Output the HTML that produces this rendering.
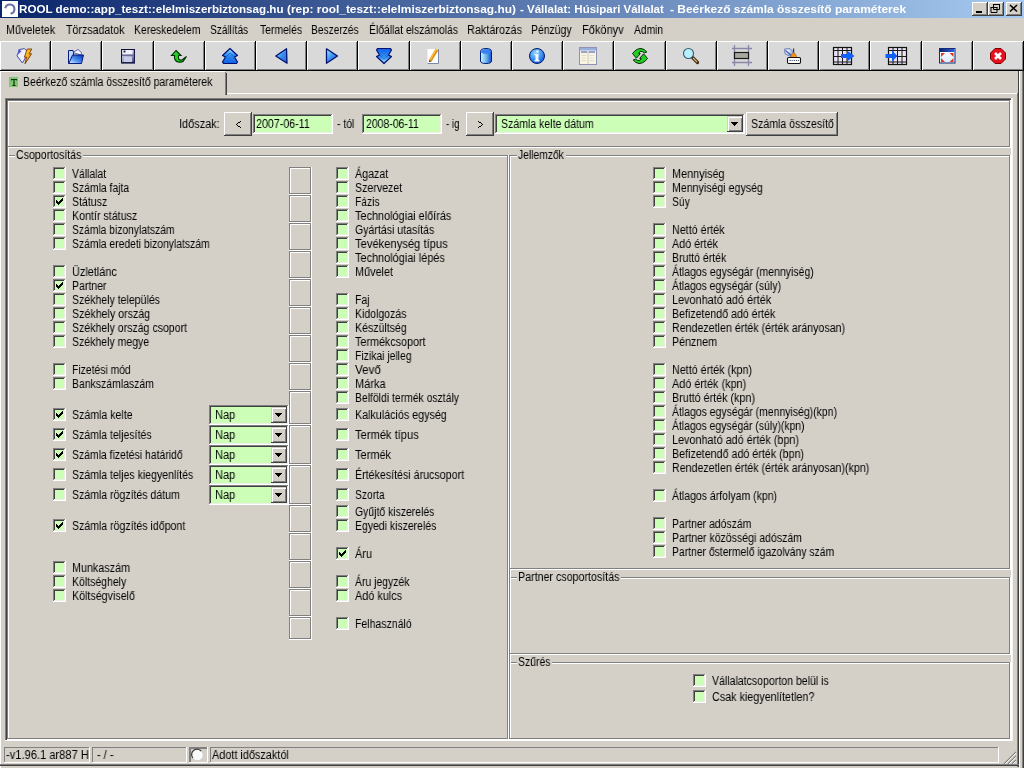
<!DOCTYPE html>
<html><head><meta charset="utf-8"><title>ROOL</title>
<style>
html,body{margin:0;padding:0;width:1024px;height:768px;overflow:hidden;background:#D4D0C8;}
body{position:relative;font-family:"Liberation Sans",sans-serif;}
#r div{position:absolute;}
#r .t{position:absolute;will-change:transform;font-size:12px;line-height:13px;white-space:pre;transform-origin:0 0;color:#000;}
svg{position:absolute;left:0;top:0;}
</style></head><body><div id="r">
<div style="left:0px;top:0px;width:1024px;height:18px;background:linear-gradient(to right,#0A246A,#A6CAF0);"></div><div style="left:2px;top:1px;width:16px;height:16px;background:#FFFFFF;"></div><div class="t" style="left:19.25px;top:3px;font-weight:bold;font-size:11px;color:#FFFFFF;transform:scaleX(1.0566);">ROOL demo::app_teszt::elelmiszerbiztonsag.hu</div><div class="t" style="left:286.6px;top:3px;font-weight:bold;font-size:11px;color:#FFFFFF;transform:scaleX(1.0825);">(rep: rool_teszt::elelmiszerbiztonsag.hu)</div><div class="t" style="left:519.7px;top:3px;font-weight:bold;font-size:11px;color:#FFFFFF;transform:scaleX(1.0457);">- Vállalat: Húsipari Vállalat</div><div class="t" style="left:669.5px;top:3px;font-weight:bold;font-size:11px;color:#FFFFFF;transform:scaleX(1.0876);">- Beérkező számla összesítő paraméterek</div><div style="left:972px;top:2px;width:16px;height:14px;background:#D4D0C8;"></div><div style="left:972px;top:2px;width:16px;height:1px;background:#FFFFFF;"></div><div style="left:972px;top:2px;width:1px;height:14px;background:#FFFFFF;"></div><div style="left:972px;top:15px;width:16px;height:1px;background:#404040;"></div><div style="left:987px;top:2px;width:1px;height:14px;background:#404040;"></div><div style="left:973px;top:14px;width:14px;height:1px;background:#808080;"></div><div style="left:986px;top:3px;width:1px;height:12px;background:#808080;"></div><div style="left:988px;top:2px;width:16px;height:14px;background:#D4D0C8;"></div><div style="left:988px;top:2px;width:16px;height:1px;background:#FFFFFF;"></div><div style="left:988px;top:2px;width:1px;height:14px;background:#FFFFFF;"></div><div style="left:988px;top:15px;width:16px;height:1px;background:#404040;"></div><div style="left:1003px;top:2px;width:1px;height:14px;background:#404040;"></div><div style="left:989px;top:14px;width:14px;height:1px;background:#808080;"></div><div style="left:1002px;top:3px;width:1px;height:12px;background:#808080;"></div><div style="left:1006px;top:2px;width:16px;height:14px;background:#D4D0C8;"></div><div style="left:1006px;top:2px;width:16px;height:1px;background:#FFFFFF;"></div><div style="left:1006px;top:2px;width:1px;height:14px;background:#FFFFFF;"></div><div style="left:1006px;top:15px;width:16px;height:1px;background:#404040;"></div><div style="left:1021px;top:2px;width:1px;height:14px;background:#404040;"></div><div style="left:1007px;top:14px;width:14px;height:1px;background:#808080;"></div><div style="left:1020px;top:3px;width:1px;height:12px;background:#808080;"></div><div class="t" style="left:6.0px;top:24px;transform:scaleX(0.8981);">Műveletek</div><div class="t" style="left:66.0px;top:24px;transform:scaleX(0.8864);">Törzsadatok</div><div class="t" style="left:134.0px;top:24px;transform:scaleX(0.8667);">Kereskedelem</div><div class="t" style="left:210.0px;top:24px;transform:scaleX(0.8409);">Szállítás</div><div class="t" style="left:259.5px;top:24px;transform:scaleX(0.8646);">Termelés</div><div class="t" style="left:311.0px;top:24px;transform:scaleX(0.8500);">Beszerzés</div><div class="t" style="left:368.5px;top:24px;transform:scaleX(0.8663);">Élőállat elszámolás</div><div class="t" style="left:466.5px;top:24px;transform:scaleX(0.9068);">Raktározás</div><div class="t" style="left:531.0px;top:24px;transform:scaleX(0.8696);">Pénzügy</div><div class="t" style="left:581.5px;top:24px;transform:scaleX(0.9205);">Főkönyv</div><div class="t" style="left:633.75px;top:24px;transform:scaleX(0.8561);">Admin</div><div style="left:0px;top:41px;width:51px;height:30px;background:#D9D9DA;"></div><div style="left:0px;top:41px;width:51px;height:1px;background:#FFFFFF;"></div><div style="left:0px;top:41px;width:1px;height:30px;background:#FFFFFF;"></div><div style="left:0px;top:70px;width:51px;height:1px;background:#000000;"></div><div style="left:50px;top:41px;width:1px;height:30px;background:#000000;"></div><div style="left:1px;top:69px;width:49px;height:1px;background:#808080;"></div><div style="left:49px;top:42px;width:1px;height:28px;background:#808080;"></div><div style="left:51px;top:41px;width:51px;height:30px;background:#D9D9DA;"></div><div style="left:51px;top:41px;width:51px;height:1px;background:#FFFFFF;"></div><div style="left:51px;top:41px;width:1px;height:30px;background:#FFFFFF;"></div><div style="left:51px;top:70px;width:51px;height:1px;background:#000000;"></div><div style="left:101px;top:41px;width:1px;height:30px;background:#000000;"></div><div style="left:52px;top:69px;width:49px;height:1px;background:#808080;"></div><div style="left:100px;top:42px;width:1px;height:28px;background:#808080;"></div><div style="left:102px;top:41px;width:52px;height:30px;background:#D9D9DA;"></div><div style="left:102px;top:41px;width:52px;height:1px;background:#FFFFFF;"></div><div style="left:102px;top:41px;width:1px;height:30px;background:#FFFFFF;"></div><div style="left:102px;top:70px;width:52px;height:1px;background:#000000;"></div><div style="left:153px;top:41px;width:1px;height:30px;background:#000000;"></div><div style="left:103px;top:69px;width:50px;height:1px;background:#808080;"></div><div style="left:152px;top:42px;width:1px;height:28px;background:#808080;"></div><div style="left:154px;top:41px;width:51px;height:30px;background:#D9D9DA;"></div><div style="left:154px;top:41px;width:51px;height:1px;background:#FFFFFF;"></div><div style="left:154px;top:41px;width:1px;height:30px;background:#FFFFFF;"></div><div style="left:154px;top:70px;width:51px;height:1px;background:#000000;"></div><div style="left:204px;top:41px;width:1px;height:30px;background:#000000;"></div><div style="left:155px;top:69px;width:49px;height:1px;background:#808080;"></div><div style="left:203px;top:42px;width:1px;height:28px;background:#808080;"></div><div style="left:205px;top:41px;width:51px;height:30px;background:#D9D9DA;"></div><div style="left:205px;top:41px;width:51px;height:1px;background:#FFFFFF;"></div><div style="left:205px;top:41px;width:1px;height:30px;background:#FFFFFF;"></div><div style="left:205px;top:70px;width:51px;height:1px;background:#000000;"></div><div style="left:255px;top:41px;width:1px;height:30px;background:#000000;"></div><div style="left:206px;top:69px;width:49px;height:1px;background:#808080;"></div><div style="left:254px;top:42px;width:1px;height:28px;background:#808080;"></div><div style="left:256px;top:41px;width:51px;height:30px;background:#D9D9DA;"></div><div style="left:256px;top:41px;width:51px;height:1px;background:#FFFFFF;"></div><div style="left:256px;top:41px;width:1px;height:30px;background:#FFFFFF;"></div><div style="left:256px;top:70px;width:51px;height:1px;background:#000000;"></div><div style="left:306px;top:41px;width:1px;height:30px;background:#000000;"></div><div style="left:257px;top:69px;width:49px;height:1px;background:#808080;"></div><div style="left:305px;top:42px;width:1px;height:28px;background:#808080;"></div><div style="left:307px;top:41px;width:51px;height:30px;background:#D9D9DA;"></div><div style="left:307px;top:41px;width:51px;height:1px;background:#FFFFFF;"></div><div style="left:307px;top:41px;width:1px;height:30px;background:#FFFFFF;"></div><div style="left:307px;top:70px;width:51px;height:1px;background:#000000;"></div><div style="left:357px;top:41px;width:1px;height:30px;background:#000000;"></div><div style="left:308px;top:69px;width:49px;height:1px;background:#808080;"></div><div style="left:356px;top:42px;width:1px;height:28px;background:#808080;"></div><div style="left:358px;top:41px;width:52px;height:30px;background:#D9D9DA;"></div><div style="left:358px;top:41px;width:52px;height:1px;background:#FFFFFF;"></div><div style="left:358px;top:41px;width:1px;height:30px;background:#FFFFFF;"></div><div style="left:358px;top:70px;width:52px;height:1px;background:#000000;"></div><div style="left:409px;top:41px;width:1px;height:30px;background:#000000;"></div><div style="left:359px;top:69px;width:50px;height:1px;background:#808080;"></div><div style="left:408px;top:42px;width:1px;height:28px;background:#808080;"></div><div style="left:410px;top:41px;width:51px;height:30px;background:#D9D9DA;"></div><div style="left:410px;top:41px;width:51px;height:1px;background:#FFFFFF;"></div><div style="left:410px;top:41px;width:1px;height:30px;background:#FFFFFF;"></div><div style="left:410px;top:70px;width:51px;height:1px;background:#000000;"></div><div style="left:460px;top:41px;width:1px;height:30px;background:#000000;"></div><div style="left:411px;top:69px;width:49px;height:1px;background:#808080;"></div><div style="left:459px;top:42px;width:1px;height:28px;background:#808080;"></div><div style="left:461px;top:41px;width:51px;height:30px;background:#D9D9DA;"></div><div style="left:461px;top:41px;width:51px;height:1px;background:#FFFFFF;"></div><div style="left:461px;top:41px;width:1px;height:30px;background:#FFFFFF;"></div><div style="left:461px;top:70px;width:51px;height:1px;background:#000000;"></div><div style="left:511px;top:41px;width:1px;height:30px;background:#000000;"></div><div style="left:462px;top:69px;width:49px;height:1px;background:#808080;"></div><div style="left:510px;top:42px;width:1px;height:28px;background:#808080;"></div><div style="left:512px;top:41px;width:51px;height:30px;background:#D9D9DA;"></div><div style="left:512px;top:41px;width:51px;height:1px;background:#FFFFFF;"></div><div style="left:512px;top:41px;width:1px;height:30px;background:#FFFFFF;"></div><div style="left:512px;top:70px;width:51px;height:1px;background:#000000;"></div><div style="left:562px;top:41px;width:1px;height:30px;background:#000000;"></div><div style="left:513px;top:69px;width:49px;height:1px;background:#808080;"></div><div style="left:561px;top:42px;width:1px;height:28px;background:#808080;"></div><div style="left:563px;top:41px;width:51px;height:30px;background:#D9D9DA;"></div><div style="left:563px;top:41px;width:51px;height:1px;background:#FFFFFF;"></div><div style="left:563px;top:41px;width:1px;height:30px;background:#FFFFFF;"></div><div style="left:563px;top:70px;width:51px;height:1px;background:#000000;"></div><div style="left:613px;top:41px;width:1px;height:30px;background:#000000;"></div><div style="left:564px;top:69px;width:49px;height:1px;background:#808080;"></div><div style="left:612px;top:42px;width:1px;height:28px;background:#808080;"></div><div style="left:614px;top:41px;width:52px;height:30px;background:#D9D9DA;"></div><div style="left:614px;top:41px;width:52px;height:1px;background:#FFFFFF;"></div><div style="left:614px;top:41px;width:1px;height:30px;background:#FFFFFF;"></div><div style="left:614px;top:70px;width:52px;height:1px;background:#000000;"></div><div style="left:665px;top:41px;width:1px;height:30px;background:#000000;"></div><div style="left:615px;top:69px;width:50px;height:1px;background:#808080;"></div><div style="left:664px;top:42px;width:1px;height:28px;background:#808080;"></div><div style="left:666px;top:41px;width:51px;height:30px;background:#D9D9DA;"></div><div style="left:666px;top:41px;width:51px;height:1px;background:#FFFFFF;"></div><div style="left:666px;top:41px;width:1px;height:30px;background:#FFFFFF;"></div><div style="left:666px;top:70px;width:51px;height:1px;background:#000000;"></div><div style="left:716px;top:41px;width:1px;height:30px;background:#000000;"></div><div style="left:667px;top:69px;width:49px;height:1px;background:#808080;"></div><div style="left:715px;top:42px;width:1px;height:28px;background:#808080;"></div><div style="left:717px;top:41px;width:51px;height:30px;background:#D9D9DA;"></div><div style="left:717px;top:41px;width:51px;height:1px;background:#FFFFFF;"></div><div style="left:717px;top:41px;width:1px;height:30px;background:#FFFFFF;"></div><div style="left:717px;top:70px;width:51px;height:1px;background:#000000;"></div><div style="left:767px;top:41px;width:1px;height:30px;background:#000000;"></div><div style="left:718px;top:69px;width:49px;height:1px;background:#808080;"></div><div style="left:766px;top:42px;width:1px;height:28px;background:#808080;"></div><div style="left:768px;top:41px;width:51px;height:30px;background:#D9D9DA;"></div><div style="left:768px;top:41px;width:51px;height:1px;background:#FFFFFF;"></div><div style="left:768px;top:41px;width:1px;height:30px;background:#FFFFFF;"></div><div style="left:768px;top:70px;width:51px;height:1px;background:#000000;"></div><div style="left:818px;top:41px;width:1px;height:30px;background:#000000;"></div><div style="left:769px;top:69px;width:49px;height:1px;background:#808080;"></div><div style="left:817px;top:42px;width:1px;height:28px;background:#808080;"></div><div style="left:819px;top:41px;width:51px;height:30px;background:#D9D9DA;"></div><div style="left:819px;top:41px;width:51px;height:1px;background:#FFFFFF;"></div><div style="left:819px;top:41px;width:1px;height:30px;background:#FFFFFF;"></div><div style="left:819px;top:70px;width:51px;height:1px;background:#000000;"></div><div style="left:869px;top:41px;width:1px;height:30px;background:#000000;"></div><div style="left:820px;top:69px;width:49px;height:1px;background:#808080;"></div><div style="left:868px;top:42px;width:1px;height:28px;background:#808080;"></div><div style="left:870px;top:41px;width:52px;height:30px;background:#D9D9DA;"></div><div style="left:870px;top:41px;width:52px;height:1px;background:#FFFFFF;"></div><div style="left:870px;top:41px;width:1px;height:30px;background:#FFFFFF;"></div><div style="left:870px;top:70px;width:52px;height:1px;background:#000000;"></div><div style="left:921px;top:41px;width:1px;height:30px;background:#000000;"></div><div style="left:871px;top:69px;width:50px;height:1px;background:#808080;"></div><div style="left:920px;top:42px;width:1px;height:28px;background:#808080;"></div><div style="left:922px;top:41px;width:51px;height:30px;background:#D9D9DA;"></div><div style="left:922px;top:41px;width:51px;height:1px;background:#FFFFFF;"></div><div style="left:922px;top:41px;width:1px;height:30px;background:#FFFFFF;"></div><div style="left:922px;top:70px;width:51px;height:1px;background:#000000;"></div><div style="left:972px;top:41px;width:1px;height:30px;background:#000000;"></div><div style="left:923px;top:69px;width:49px;height:1px;background:#808080;"></div><div style="left:971px;top:42px;width:1px;height:28px;background:#808080;"></div><div style="left:973px;top:41px;width:51px;height:30px;background:#D9D9DA;"></div><div style="left:973px;top:41px;width:51px;height:1px;background:#FFFFFF;"></div><div style="left:973px;top:41px;width:1px;height:30px;background:#FFFFFF;"></div><div style="left:973px;top:70px;width:51px;height:1px;background:#000000;"></div><div style="left:1023px;top:41px;width:1px;height:30px;background:#000000;"></div><div style="left:974px;top:69px;width:49px;height:1px;background:#808080;"></div><div style="left:1022px;top:42px;width:1px;height:28px;background:#808080;"></div><div style="left:0px;top:71px;width:225px;height:1px;background:#FFFFFF;"></div><div style="left:0px;top:71px;width:1px;height:698px;background:#FFFFFF;"></div><div style="left:225px;top:72px;width:1px;height:23px;background:#808080;"></div><div style="left:226px;top:73px;width:1px;height:22px;background:#404040;"></div><div style="left:227px;top:93px;width:790px;height:1px;background:#FFFFFF;"></div><div style="left:9px;top:77px;width:9px;height:10px;background:#8FD28A;"></div><div class="t" style="left:22.75px;top:76px;transform:scaleX(0.8738);">Beérkező számla összesítő paraméterek</div><div style="left:1017px;top:93px;width:1px;height:674px;background:#808080;"></div><div style="left:1018px;top:71px;width:1px;height:696px;background:#404040;"></div><div style="left:1019px;top:71px;width:1px;height:698px;background:#FFFFFF;"></div><div style="left:1022px;top:71px;width:1px;height:698px;background:#808080;"></div><div style="left:1023px;top:71px;width:1px;height:698px;background:#404040;"></div><div style="left:1012px;top:98px;width:1px;height:643px;background:#F4F4F4;"></div><div style="left:5px;top:98px;width:1007px;height:1px;background:#808080;"></div><div style="left:5px;top:98px;width:1px;height:643px;background:#808080;"></div><div style="left:6px;top:99px;width:1005px;height:1px;background:#404040;"></div><div style="left:6px;top:99px;width:1px;height:641px;background:#404040;"></div><div style="left:5px;top:740px;width:1007px;height:1px;background:#FFFFFF;"></div><div style="left:1011px;top:98px;width:1px;height:643px;background:#FFFFFF;"></div><div style="left:7px;top:100px;width:1003px;height:1px;background:#808080;"></div><div style="left:8px;top:101px;width:1003px;height:1px;background:#FFFFFF;"></div><div style="left:7px;top:100px;width:1px;height:47px;background:#808080;"></div><div style="left:8px;top:101px;width:1px;height:47px;background:#FFFFFF;"></div><div style="left:7px;top:146px;width:1003px;height:1px;background:#808080;"></div><div style="left:7px;top:147px;width:1004px;height:1px;background:#FFFFFF;"></div><div style="left:1009px;top:100px;width:1px;height:47px;background:#808080;"></div><div style="left:1010px;top:100px;width:1px;height:48px;background:#FFFFFF;"></div><div style="left:7px;top:155px;width:501px;height:1px;background:#808080;"></div><div style="left:8px;top:156px;width:501px;height:1px;background:#FFFFFF;"></div><div style="left:7px;top:155px;width:1px;height:584px;background:#808080;"></div><div style="left:8px;top:156px;width:1px;height:584px;background:#FFFFFF;"></div><div style="left:7px;top:738px;width:501px;height:1px;background:#808080;"></div><div style="left:7px;top:739px;width:502px;height:1px;background:#FFFFFF;"></div><div style="left:507px;top:155px;width:1px;height:584px;background:#808080;"></div><div style="left:508px;top:155px;width:1px;height:585px;background:#FFFFFF;"></div><div style="left:509px;top:155px;width:501px;height:1px;background:#808080;"></div><div style="left:510px;top:156px;width:501px;height:1px;background:#FFFFFF;"></div><div style="left:509px;top:155px;width:1px;height:414px;background:#808080;"></div><div style="left:510px;top:156px;width:1px;height:414px;background:#FFFFFF;"></div><div style="left:509px;top:568px;width:501px;height:1px;background:#808080;"></div><div style="left:509px;top:569px;width:502px;height:1px;background:#FFFFFF;"></div><div style="left:1009px;top:155px;width:1px;height:414px;background:#808080;"></div><div style="left:1010px;top:155px;width:1px;height:415px;background:#FFFFFF;"></div><div style="left:509px;top:577px;width:501px;height:1px;background:#808080;"></div><div style="left:510px;top:578px;width:501px;height:1px;background:#FFFFFF;"></div><div style="left:509px;top:577px;width:1px;height:77px;background:#808080;"></div><div style="left:510px;top:578px;width:1px;height:77px;background:#FFFFFF;"></div><div style="left:509px;top:653px;width:501px;height:1px;background:#808080;"></div><div style="left:509px;top:654px;width:502px;height:1px;background:#FFFFFF;"></div><div style="left:1009px;top:577px;width:1px;height:77px;background:#808080;"></div><div style="left:1010px;top:577px;width:1px;height:78px;background:#FFFFFF;"></div><div style="left:509px;top:662px;width:501px;height:1px;background:#808080;"></div><div style="left:510px;top:663px;width:501px;height:1px;background:#FFFFFF;"></div><div style="left:509px;top:662px;width:1px;height:77px;background:#808080;"></div><div style="left:510px;top:663px;width:1px;height:77px;background:#FFFFFF;"></div><div style="left:509px;top:738px;width:501px;height:1px;background:#808080;"></div><div style="left:509px;top:739px;width:502px;height:1px;background:#FFFFFF;"></div><div style="left:1009px;top:662px;width:1px;height:77px;background:#808080;"></div><div style="left:1010px;top:662px;width:1px;height:78px;background:#FFFFFF;"></div><div style="left:509px;top:569px;width:1px;height:9px;background:#808080;"></div><div style="left:510px;top:569px;width:1px;height:9px;background:#FFFFFF;"></div><div style="left:509px;top:654px;width:1px;height:9px;background:#808080;"></div><div style="left:510px;top:654px;width:1px;height:9px;background:#FFFFFF;"></div><div style="left:7px;top:147px;width:1px;height:9px;background:#808080;"></div><div style="left:8px;top:147px;width:1px;height:9px;background:#FFFFFF;"></div><div style="left:15px;top:150px;width:68px;height:12px;background:#D4D0C8;"></div><div class="t" style="left:15.5px;top:149px;transform:scaleX(0.8836);">Csoportosítás</div><div style="left:517px;top:150px;width:49px;height:12px;background:#D4D0C8;"></div><div class="t" style="left:518.0px;top:149px;transform:scaleX(0.8585);">Jellemzők</div><div style="left:517px;top:572px;width:104px;height:12px;background:#D4D0C8;"></div><div class="t" style="left:517.75px;top:571px;transform:scaleX(0.8894);">Partner csoportosítás</div><div style="left:517px;top:657px;width:35px;height:12px;background:#D4D0C8;"></div><div class="t" style="left:517.75px;top:656px;transform:scaleX(0.8694);">Szűrés</div><div class="t" style="left:179.25px;top:118px;transform:scaleX(0.9116);">Időszak:</div><div style="left:224px;top:112px;width:28px;height:24px;background:#D4D0C8;"></div><div style="left:224px;top:112px;width:28px;height:1px;background:#FFFFFF;"></div><div style="left:224px;top:112px;width:1px;height:24px;background:#FFFFFF;"></div><div style="left:224px;top:135px;width:28px;height:1px;background:#404040;"></div><div style="left:251px;top:112px;width:1px;height:24px;background:#404040;"></div><div style="left:225px;top:134px;width:26px;height:1px;background:#808080;"></div><div style="left:250px;top:113px;width:1px;height:22px;background:#808080;"></div><div style="left:253px;top:114px;width:80px;height:20px;background:#CCFEB8;"></div><div style="left:253px;top:114px;width:80px;height:1px;background:#808080;"></div><div style="left:253px;top:114px;width:1px;height:20px;background:#808080;"></div><div style="left:254px;top:115px;width:78px;height:1px;background:#404040;"></div><div style="left:254px;top:115px;width:1px;height:18px;background:#404040;"></div><div style="left:253px;top:133px;width:80px;height:1px;background:#FFFFFF;"></div><div style="left:332px;top:114px;width:1px;height:20px;background:#FFFFFF;"></div><div style="left:254px;top:132px;width:78px;height:1px;background:#ECEEE8;"></div><div style="left:331px;top:115px;width:1px;height:18px;background:#ECEEE8;"></div><div class="t" style="left:255.75px;top:118px;transform:scaleX(0.8898);">2007-06-11</div><div class="t" style="left:337.0px;top:118px;transform:scaleX(0.8632);">- tól</div><div style="left:362px;top:114px;width:80px;height:20px;background:#CCFEB8;"></div><div style="left:362px;top:114px;width:80px;height:1px;background:#808080;"></div><div style="left:362px;top:114px;width:1px;height:20px;background:#808080;"></div><div style="left:363px;top:115px;width:78px;height:1px;background:#404040;"></div><div style="left:363px;top:115px;width:1px;height:18px;background:#404040;"></div><div style="left:362px;top:133px;width:80px;height:1px;background:#FFFFFF;"></div><div style="left:441px;top:114px;width:1px;height:20px;background:#FFFFFF;"></div><div style="left:363px;top:132px;width:78px;height:1px;background:#ECEEE8;"></div><div style="left:440px;top:115px;width:1px;height:18px;background:#ECEEE8;"></div><div class="t" style="left:366.0px;top:118px;transform:scaleX(0.8729);">2008-06-11</div><div class="t" style="left:446.0px;top:118px;transform:scaleX(0.8125);">- ig</div><div style="left:466px;top:112px;width:28px;height:24px;background:#D4D0C8;"></div><div style="left:466px;top:112px;width:28px;height:1px;background:#FFFFFF;"></div><div style="left:466px;top:112px;width:1px;height:24px;background:#FFFFFF;"></div><div style="left:466px;top:135px;width:28px;height:1px;background:#404040;"></div><div style="left:493px;top:112px;width:1px;height:24px;background:#404040;"></div><div style="left:467px;top:134px;width:26px;height:1px;background:#808080;"></div><div style="left:492px;top:113px;width:1px;height:22px;background:#808080;"></div><div style="left:495px;top:114px;width:250px;height:20px;background:#CCFEB8;"></div><div style="left:495px;top:114px;width:250px;height:1px;background:#808080;"></div><div style="left:495px;top:114px;width:1px;height:20px;background:#808080;"></div><div style="left:496px;top:115px;width:248px;height:1px;background:#404040;"></div><div style="left:496px;top:115px;width:1px;height:18px;background:#404040;"></div><div style="left:495px;top:133px;width:250px;height:1px;background:#FFFFFF;"></div><div style="left:744px;top:114px;width:1px;height:20px;background:#FFFFFF;"></div><div style="left:496px;top:132px;width:248px;height:1px;background:#ECEEE8;"></div><div style="left:743px;top:115px;width:1px;height:18px;background:#ECEEE8;"></div><div style="left:727px;top:116px;width:16px;height:16px;background:#D4D0C8;"></div><div style="left:727px;top:116px;width:16px;height:1px;background:#D4D0C8;"></div><div style="left:727px;top:116px;width:1px;height:16px;background:#D4D0C8;"></div><div style="left:727px;top:131px;width:16px;height:1px;background:#404040;"></div><div style="left:742px;top:116px;width:1px;height:16px;background:#404040;"></div><div style="left:728px;top:130px;width:14px;height:1px;background:#808080;"></div><div style="left:741px;top:117px;width:1px;height:14px;background:#808080;"></div><div style="left:728px;top:117px;width:14px;height:1px;background:#FFFFFF;"></div><div style="left:728px;top:117px;width:1px;height:14px;background:#FFFFFF;"></div><div class="t" style="left:500.75px;top:118px;transform:scaleX(0.8788);">Számla kelte dátum</div><div style="left:746px;top:112px;width:92px;height:24px;background:#D4D0C8;"></div><div style="left:746px;top:112px;width:92px;height:1px;background:#FFFFFF;"></div><div style="left:746px;top:112px;width:1px;height:24px;background:#FFFFFF;"></div><div style="left:746px;top:135px;width:92px;height:1px;background:#404040;"></div><div style="left:837px;top:112px;width:1px;height:24px;background:#404040;"></div><div style="left:747px;top:134px;width:90px;height:1px;background:#808080;"></div><div style="left:836px;top:113px;width:1px;height:22px;background:#808080;"></div><div class="t" style="left:750.5px;top:118px;transform:scaleX(0.8817);">Számla összesítő</div><div style="left:53px;top:167px;width:13px;height:13px;background:#CCFEB8;"></div><div style="left:53px;top:167px;width:13px;height:1px;background:#808080;"></div><div style="left:53px;top:167px;width:1px;height:13px;background:#808080;"></div><div style="left:54px;top:168px;width:11px;height:1px;background:#404040;"></div><div style="left:54px;top:168px;width:1px;height:11px;background:#404040;"></div><div style="left:53px;top:179px;width:13px;height:1px;background:#FFFFFF;"></div><div style="left:65px;top:167px;width:1px;height:13px;background:#FFFFFF;"></div><div style="left:54px;top:178px;width:11px;height:1px;background:#ECEEE8;"></div><div style="left:64px;top:168px;width:1px;height:11px;background:#ECEEE8;"></div><div class="t" style="left:72.0px;top:168px;transform:scaleX(0.8692);">Vállalat</div><div style="left:53px;top:181px;width:13px;height:13px;background:#CCFEB8;"></div><div style="left:53px;top:181px;width:13px;height:1px;background:#808080;"></div><div style="left:53px;top:181px;width:1px;height:13px;background:#808080;"></div><div style="left:54px;top:182px;width:11px;height:1px;background:#404040;"></div><div style="left:54px;top:182px;width:1px;height:11px;background:#404040;"></div><div style="left:53px;top:193px;width:13px;height:1px;background:#FFFFFF;"></div><div style="left:65px;top:181px;width:1px;height:13px;background:#FFFFFF;"></div><div style="left:54px;top:192px;width:11px;height:1px;background:#ECEEE8;"></div><div style="left:64px;top:182px;width:1px;height:11px;background:#ECEEE8;"></div><div class="t" style="left:72.0px;top:182px;transform:scaleX(0.8662);">Számla fajta</div><div style="left:53px;top:195px;width:13px;height:13px;background:#CCFEB8;"></div><div style="left:53px;top:195px;width:13px;height:1px;background:#808080;"></div><div style="left:53px;top:195px;width:1px;height:13px;background:#808080;"></div><div style="left:54px;top:196px;width:11px;height:1px;background:#404040;"></div><div style="left:54px;top:196px;width:1px;height:11px;background:#404040;"></div><div style="left:53px;top:207px;width:13px;height:1px;background:#FFFFFF;"></div><div style="left:65px;top:195px;width:1px;height:13px;background:#FFFFFF;"></div><div style="left:54px;top:206px;width:11px;height:1px;background:#ECEEE8;"></div><div style="left:64px;top:196px;width:1px;height:11px;background:#ECEEE8;"></div><div class="t" style="left:72.0px;top:196px;transform:scaleX(0.8795);">Státusz</div><div style="left:53px;top:209px;width:13px;height:13px;background:#CCFEB8;"></div><div style="left:53px;top:209px;width:13px;height:1px;background:#808080;"></div><div style="left:53px;top:209px;width:1px;height:13px;background:#808080;"></div><div style="left:54px;top:210px;width:11px;height:1px;background:#404040;"></div><div style="left:54px;top:210px;width:1px;height:11px;background:#404040;"></div><div style="left:53px;top:221px;width:13px;height:1px;background:#FFFFFF;"></div><div style="left:65px;top:209px;width:1px;height:13px;background:#FFFFFF;"></div><div style="left:54px;top:220px;width:11px;height:1px;background:#ECEEE8;"></div><div style="left:64px;top:210px;width:1px;height:11px;background:#ECEEE8;"></div><div class="t" style="left:72.0px;top:210px;transform:scaleX(0.8903);">Kontír státusz</div><div style="left:53px;top:223px;width:13px;height:13px;background:#CCFEB8;"></div><div style="left:53px;top:223px;width:13px;height:1px;background:#808080;"></div><div style="left:53px;top:223px;width:1px;height:13px;background:#808080;"></div><div style="left:54px;top:224px;width:11px;height:1px;background:#404040;"></div><div style="left:54px;top:224px;width:1px;height:11px;background:#404040;"></div><div style="left:53px;top:235px;width:13px;height:1px;background:#FFFFFF;"></div><div style="left:65px;top:223px;width:1px;height:13px;background:#FFFFFF;"></div><div style="left:54px;top:234px;width:11px;height:1px;background:#ECEEE8;"></div><div style="left:64px;top:224px;width:1px;height:11px;background:#ECEEE8;"></div><div class="t" style="left:72.0px;top:224px;transform:scaleX(0.8585);">Számla bizonylatszám</div><div style="left:53px;top:237px;width:13px;height:13px;background:#CCFEB8;"></div><div style="left:53px;top:237px;width:13px;height:1px;background:#808080;"></div><div style="left:53px;top:237px;width:1px;height:13px;background:#808080;"></div><div style="left:54px;top:238px;width:11px;height:1px;background:#404040;"></div><div style="left:54px;top:238px;width:1px;height:11px;background:#404040;"></div><div style="left:53px;top:249px;width:13px;height:1px;background:#FFFFFF;"></div><div style="left:65px;top:237px;width:1px;height:13px;background:#FFFFFF;"></div><div style="left:54px;top:248px;width:11px;height:1px;background:#ECEEE8;"></div><div style="left:64px;top:238px;width:1px;height:11px;background:#ECEEE8;"></div><div class="t" style="left:72.0px;top:238px;transform:scaleX(0.8633);">Számla eredeti bizonylatszám</div><div style="left:53px;top:265px;width:13px;height:13px;background:#CCFEB8;"></div><div style="left:53px;top:265px;width:13px;height:1px;background:#808080;"></div><div style="left:53px;top:265px;width:1px;height:13px;background:#808080;"></div><div style="left:54px;top:266px;width:11px;height:1px;background:#404040;"></div><div style="left:54px;top:266px;width:1px;height:11px;background:#404040;"></div><div style="left:53px;top:277px;width:13px;height:1px;background:#FFFFFF;"></div><div style="left:65px;top:265px;width:1px;height:13px;background:#FFFFFF;"></div><div style="left:54px;top:276px;width:11px;height:1px;background:#ECEEE8;"></div><div style="left:64px;top:266px;width:1px;height:11px;background:#ECEEE8;"></div><div class="t" style="left:72.0px;top:266px;transform:scaleX(0.9083);">Üzletlánc</div><div style="left:53px;top:279px;width:13px;height:13px;background:#CCFEB8;"></div><div style="left:53px;top:279px;width:13px;height:1px;background:#808080;"></div><div style="left:53px;top:279px;width:1px;height:13px;background:#808080;"></div><div style="left:54px;top:280px;width:11px;height:1px;background:#404040;"></div><div style="left:54px;top:280px;width:1px;height:11px;background:#404040;"></div><div style="left:53px;top:291px;width:13px;height:1px;background:#FFFFFF;"></div><div style="left:65px;top:279px;width:1px;height:13px;background:#FFFFFF;"></div><div style="left:54px;top:290px;width:11px;height:1px;background:#ECEEE8;"></div><div style="left:64px;top:280px;width:1px;height:11px;background:#ECEEE8;"></div><div class="t" style="left:72.0px;top:280px;transform:scaleX(0.8763);">Partner</div><div style="left:53px;top:293px;width:13px;height:13px;background:#CCFEB8;"></div><div style="left:53px;top:293px;width:13px;height:1px;background:#808080;"></div><div style="left:53px;top:293px;width:1px;height:13px;background:#808080;"></div><div style="left:54px;top:294px;width:11px;height:1px;background:#404040;"></div><div style="left:54px;top:294px;width:1px;height:11px;background:#404040;"></div><div style="left:53px;top:305px;width:13px;height:1px;background:#FFFFFF;"></div><div style="left:65px;top:293px;width:1px;height:13px;background:#FFFFFF;"></div><div style="left:54px;top:304px;width:11px;height:1px;background:#ECEEE8;"></div><div style="left:64px;top:294px;width:1px;height:11px;background:#ECEEE8;"></div><div class="t" style="left:72.0px;top:294px;transform:scaleX(0.8788);">Székhely település</div><div style="left:53px;top:307px;width:13px;height:13px;background:#CCFEB8;"></div><div style="left:53px;top:307px;width:13px;height:1px;background:#808080;"></div><div style="left:53px;top:307px;width:1px;height:13px;background:#808080;"></div><div style="left:54px;top:308px;width:11px;height:1px;background:#404040;"></div><div style="left:54px;top:308px;width:1px;height:11px;background:#404040;"></div><div style="left:53px;top:319px;width:13px;height:1px;background:#FFFFFF;"></div><div style="left:65px;top:307px;width:1px;height:13px;background:#FFFFFF;"></div><div style="left:54px;top:318px;width:11px;height:1px;background:#ECEEE8;"></div><div style="left:64px;top:308px;width:1px;height:11px;background:#ECEEE8;"></div><div class="t" style="left:72.0px;top:308px;transform:scaleX(0.8872);">Székhely ország</div><div style="left:53px;top:321px;width:13px;height:13px;background:#CCFEB8;"></div><div style="left:53px;top:321px;width:13px;height:1px;background:#808080;"></div><div style="left:53px;top:321px;width:1px;height:13px;background:#808080;"></div><div style="left:54px;top:322px;width:11px;height:1px;background:#404040;"></div><div style="left:54px;top:322px;width:1px;height:11px;background:#404040;"></div><div style="left:53px;top:333px;width:13px;height:1px;background:#FFFFFF;"></div><div style="left:65px;top:321px;width:1px;height:13px;background:#FFFFFF;"></div><div style="left:54px;top:332px;width:11px;height:1px;background:#ECEEE8;"></div><div style="left:64px;top:322px;width:1px;height:11px;background:#ECEEE8;"></div><div class="t" style="left:72.0px;top:322px;transform:scaleX(0.8792);">Székhely ország csoport</div><div style="left:53px;top:335px;width:13px;height:13px;background:#CCFEB8;"></div><div style="left:53px;top:335px;width:13px;height:1px;background:#808080;"></div><div style="left:53px;top:335px;width:1px;height:13px;background:#808080;"></div><div style="left:54px;top:336px;width:11px;height:1px;background:#404040;"></div><div style="left:54px;top:336px;width:1px;height:11px;background:#404040;"></div><div style="left:53px;top:347px;width:13px;height:1px;background:#FFFFFF;"></div><div style="left:65px;top:335px;width:1px;height:13px;background:#FFFFFF;"></div><div style="left:54px;top:346px;width:11px;height:1px;background:#ECEEE8;"></div><div style="left:64px;top:336px;width:1px;height:11px;background:#ECEEE8;"></div><div class="t" style="left:72.0px;top:336px;transform:scaleX(0.8770);">Székhely megye</div><div style="left:53px;top:363px;width:13px;height:13px;background:#CCFEB8;"></div><div style="left:53px;top:363px;width:13px;height:1px;background:#808080;"></div><div style="left:53px;top:363px;width:1px;height:13px;background:#808080;"></div><div style="left:54px;top:364px;width:11px;height:1px;background:#404040;"></div><div style="left:54px;top:364px;width:1px;height:11px;background:#404040;"></div><div style="left:53px;top:375px;width:13px;height:1px;background:#FFFFFF;"></div><div style="left:65px;top:363px;width:1px;height:13px;background:#FFFFFF;"></div><div style="left:54px;top:374px;width:11px;height:1px;background:#ECEEE8;"></div><div style="left:64px;top:364px;width:1px;height:11px;background:#ECEEE8;"></div><div class="t" style="left:72.0px;top:364px;transform:scaleX(0.8621);">Fizetési mód</div><div style="left:53px;top:377px;width:13px;height:13px;background:#CCFEB8;"></div><div style="left:53px;top:377px;width:13px;height:1px;background:#808080;"></div><div style="left:53px;top:377px;width:1px;height:13px;background:#808080;"></div><div style="left:54px;top:378px;width:11px;height:1px;background:#404040;"></div><div style="left:54px;top:378px;width:1px;height:11px;background:#404040;"></div><div style="left:53px;top:389px;width:13px;height:1px;background:#FFFFFF;"></div><div style="left:65px;top:377px;width:1px;height:13px;background:#FFFFFF;"></div><div style="left:54px;top:388px;width:11px;height:1px;background:#ECEEE8;"></div><div style="left:64px;top:378px;width:1px;height:11px;background:#ECEEE8;"></div><div class="t" style="left:72.0px;top:378px;transform:scaleX(0.8717);">Bankszámlaszám</div><div style="left:53px;top:408px;width:13px;height:13px;background:#CCFEB8;"></div><div style="left:53px;top:408px;width:13px;height:1px;background:#808080;"></div><div style="left:53px;top:408px;width:1px;height:13px;background:#808080;"></div><div style="left:54px;top:409px;width:11px;height:1px;background:#404040;"></div><div style="left:54px;top:409px;width:1px;height:11px;background:#404040;"></div><div style="left:53px;top:420px;width:13px;height:1px;background:#FFFFFF;"></div><div style="left:65px;top:408px;width:1px;height:13px;background:#FFFFFF;"></div><div style="left:54px;top:419px;width:11px;height:1px;background:#ECEEE8;"></div><div style="left:64px;top:409px;width:1px;height:11px;background:#ECEEE8;"></div><div class="t" style="left:72.0px;top:409px;transform:scaleX(0.8821);">Számla kelte</div><div style="left:53px;top:428px;width:13px;height:13px;background:#CCFEB8;"></div><div style="left:53px;top:428px;width:13px;height:1px;background:#808080;"></div><div style="left:53px;top:428px;width:1px;height:13px;background:#808080;"></div><div style="left:54px;top:429px;width:11px;height:1px;background:#404040;"></div><div style="left:54px;top:429px;width:1px;height:11px;background:#404040;"></div><div style="left:53px;top:440px;width:13px;height:1px;background:#FFFFFF;"></div><div style="left:65px;top:428px;width:1px;height:13px;background:#FFFFFF;"></div><div style="left:54px;top:439px;width:11px;height:1px;background:#ECEEE8;"></div><div style="left:64px;top:429px;width:1px;height:11px;background:#ECEEE8;"></div><div class="t" style="left:72.0px;top:429px;transform:scaleX(0.8775);">Számla teljesítés</div><div style="left:53px;top:448px;width:13px;height:13px;background:#CCFEB8;"></div><div style="left:53px;top:448px;width:13px;height:1px;background:#808080;"></div><div style="left:53px;top:448px;width:1px;height:13px;background:#808080;"></div><div style="left:54px;top:449px;width:11px;height:1px;background:#404040;"></div><div style="left:54px;top:449px;width:1px;height:11px;background:#404040;"></div><div style="left:53px;top:460px;width:13px;height:1px;background:#FFFFFF;"></div><div style="left:65px;top:448px;width:1px;height:13px;background:#FFFFFF;"></div><div style="left:54px;top:459px;width:11px;height:1px;background:#ECEEE8;"></div><div style="left:64px;top:449px;width:1px;height:11px;background:#ECEEE8;"></div><div class="t" style="left:72.0px;top:449px;transform:scaleX(0.8683);">Számla fizetési határidő</div><div style="left:53px;top:468px;width:13px;height:13px;background:#CCFEB8;"></div><div style="left:53px;top:468px;width:13px;height:1px;background:#808080;"></div><div style="left:53px;top:468px;width:1px;height:13px;background:#808080;"></div><div style="left:54px;top:469px;width:11px;height:1px;background:#404040;"></div><div style="left:54px;top:469px;width:1px;height:11px;background:#404040;"></div><div style="left:53px;top:480px;width:13px;height:1px;background:#FFFFFF;"></div><div style="left:65px;top:468px;width:1px;height:13px;background:#FFFFFF;"></div><div style="left:54px;top:479px;width:11px;height:1px;background:#ECEEE8;"></div><div style="left:64px;top:469px;width:1px;height:11px;background:#ECEEE8;"></div><div class="t" style="left:72.0px;top:469px;transform:scaleX(0.8781);">Számla teljes kiegyenlítés</div><div style="left:53px;top:488px;width:13px;height:13px;background:#CCFEB8;"></div><div style="left:53px;top:488px;width:13px;height:1px;background:#808080;"></div><div style="left:53px;top:488px;width:1px;height:13px;background:#808080;"></div><div style="left:54px;top:489px;width:11px;height:1px;background:#404040;"></div><div style="left:54px;top:489px;width:1px;height:11px;background:#404040;"></div><div style="left:53px;top:500px;width:13px;height:1px;background:#FFFFFF;"></div><div style="left:65px;top:488px;width:1px;height:13px;background:#FFFFFF;"></div><div style="left:54px;top:499px;width:11px;height:1px;background:#ECEEE8;"></div><div style="left:64px;top:489px;width:1px;height:11px;background:#ECEEE8;"></div><div class="t" style="left:72.0px;top:489px;transform:scaleX(0.8785);">Számla rögzítés dátum</div><div style="left:53px;top:519px;width:13px;height:13px;background:#CCFEB8;"></div><div style="left:53px;top:519px;width:13px;height:1px;background:#808080;"></div><div style="left:53px;top:519px;width:1px;height:13px;background:#808080;"></div><div style="left:54px;top:520px;width:11px;height:1px;background:#404040;"></div><div style="left:54px;top:520px;width:1px;height:11px;background:#404040;"></div><div style="left:53px;top:531px;width:13px;height:1px;background:#FFFFFF;"></div><div style="left:65px;top:519px;width:1px;height:13px;background:#FFFFFF;"></div><div style="left:54px;top:530px;width:11px;height:1px;background:#ECEEE8;"></div><div style="left:64px;top:520px;width:1px;height:11px;background:#ECEEE8;"></div><div class="t" style="left:72.0px;top:520px;transform:scaleX(0.8789);">Számla rögzítés időpont</div><div style="left:53px;top:561px;width:13px;height:13px;background:#CCFEB8;"></div><div style="left:53px;top:561px;width:13px;height:1px;background:#808080;"></div><div style="left:53px;top:561px;width:1px;height:13px;background:#808080;"></div><div style="left:54px;top:562px;width:11px;height:1px;background:#404040;"></div><div style="left:54px;top:562px;width:1px;height:11px;background:#404040;"></div><div style="left:53px;top:573px;width:13px;height:1px;background:#FFFFFF;"></div><div style="left:65px;top:561px;width:1px;height:13px;background:#FFFFFF;"></div><div style="left:54px;top:572px;width:11px;height:1px;background:#ECEEE8;"></div><div style="left:64px;top:562px;width:1px;height:11px;background:#ECEEE8;"></div><div class="t" style="left:72.0px;top:562px;transform:scaleX(0.8968);">Munkaszám</div><div style="left:53px;top:575px;width:13px;height:13px;background:#CCFEB8;"></div><div style="left:53px;top:575px;width:13px;height:1px;background:#808080;"></div><div style="left:53px;top:575px;width:1px;height:13px;background:#808080;"></div><div style="left:54px;top:576px;width:11px;height:1px;background:#404040;"></div><div style="left:54px;top:576px;width:1px;height:11px;background:#404040;"></div><div style="left:53px;top:587px;width:13px;height:1px;background:#FFFFFF;"></div><div style="left:65px;top:575px;width:1px;height:13px;background:#FFFFFF;"></div><div style="left:54px;top:586px;width:11px;height:1px;background:#ECEEE8;"></div><div style="left:64px;top:576px;width:1px;height:11px;background:#ECEEE8;"></div><div class="t" style="left:72.0px;top:576px;transform:scaleX(0.8754);">Költséghely</div><div style="left:53px;top:589px;width:13px;height:13px;background:#CCFEB8;"></div><div style="left:53px;top:589px;width:13px;height:1px;background:#808080;"></div><div style="left:53px;top:589px;width:1px;height:13px;background:#808080;"></div><div style="left:54px;top:590px;width:11px;height:1px;background:#404040;"></div><div style="left:54px;top:590px;width:1px;height:11px;background:#404040;"></div><div style="left:53px;top:601px;width:13px;height:1px;background:#FFFFFF;"></div><div style="left:65px;top:589px;width:1px;height:13px;background:#FFFFFF;"></div><div style="left:54px;top:600px;width:11px;height:1px;background:#ECEEE8;"></div><div style="left:64px;top:590px;width:1px;height:11px;background:#ECEEE8;"></div><div class="t" style="left:72.0px;top:590px;transform:scaleX(0.8899);">Költségviselő</div><div style="left:209px;top:405px;width:80px;height:20px;background:#CCFEB8;"></div><div style="left:209px;top:405px;width:80px;height:1px;background:#808080;"></div><div style="left:209px;top:405px;width:1px;height:20px;background:#808080;"></div><div style="left:210px;top:406px;width:78px;height:1px;background:#404040;"></div><div style="left:210px;top:406px;width:1px;height:18px;background:#404040;"></div><div style="left:209px;top:424px;width:80px;height:1px;background:#FFFFFF;"></div><div style="left:288px;top:405px;width:1px;height:20px;background:#FFFFFF;"></div><div style="left:210px;top:423px;width:78px;height:1px;background:#ECEEE8;"></div><div style="left:287px;top:406px;width:1px;height:18px;background:#ECEEE8;"></div><div style="left:271px;top:407px;width:16px;height:16px;background:#D4D0C8;"></div><div style="left:271px;top:407px;width:16px;height:1px;background:#D4D0C8;"></div><div style="left:271px;top:407px;width:1px;height:16px;background:#D4D0C8;"></div><div style="left:271px;top:422px;width:16px;height:1px;background:#404040;"></div><div style="left:286px;top:407px;width:1px;height:16px;background:#404040;"></div><div style="left:272px;top:421px;width:14px;height:1px;background:#808080;"></div><div style="left:285px;top:408px;width:1px;height:14px;background:#808080;"></div><div style="left:272px;top:408px;width:14px;height:1px;background:#FFFFFF;"></div><div style="left:272px;top:408px;width:1px;height:14px;background:#FFFFFF;"></div><div class="t" style="left:214.75px;top:409px;transform:scaleX(0.9190);">Nap</div><div style="left:209px;top:425px;width:80px;height:20px;background:#CCFEB8;"></div><div style="left:209px;top:425px;width:80px;height:1px;background:#808080;"></div><div style="left:209px;top:425px;width:1px;height:20px;background:#808080;"></div><div style="left:210px;top:426px;width:78px;height:1px;background:#404040;"></div><div style="left:210px;top:426px;width:1px;height:18px;background:#404040;"></div><div style="left:209px;top:444px;width:80px;height:1px;background:#FFFFFF;"></div><div style="left:288px;top:425px;width:1px;height:20px;background:#FFFFFF;"></div><div style="left:210px;top:443px;width:78px;height:1px;background:#ECEEE8;"></div><div style="left:287px;top:426px;width:1px;height:18px;background:#ECEEE8;"></div><div style="left:271px;top:427px;width:16px;height:16px;background:#D4D0C8;"></div><div style="left:271px;top:427px;width:16px;height:1px;background:#D4D0C8;"></div><div style="left:271px;top:427px;width:1px;height:16px;background:#D4D0C8;"></div><div style="left:271px;top:442px;width:16px;height:1px;background:#404040;"></div><div style="left:286px;top:427px;width:1px;height:16px;background:#404040;"></div><div style="left:272px;top:441px;width:14px;height:1px;background:#808080;"></div><div style="left:285px;top:428px;width:1px;height:14px;background:#808080;"></div><div style="left:272px;top:428px;width:14px;height:1px;background:#FFFFFF;"></div><div style="left:272px;top:428px;width:1px;height:14px;background:#FFFFFF;"></div><div class="t" style="left:214.75px;top:429px;transform:scaleX(0.9190);">Nap</div><div style="left:209px;top:445px;width:80px;height:20px;background:#CCFEB8;"></div><div style="left:209px;top:445px;width:80px;height:1px;background:#808080;"></div><div style="left:209px;top:445px;width:1px;height:20px;background:#808080;"></div><div style="left:210px;top:446px;width:78px;height:1px;background:#404040;"></div><div style="left:210px;top:446px;width:1px;height:18px;background:#404040;"></div><div style="left:209px;top:464px;width:80px;height:1px;background:#FFFFFF;"></div><div style="left:288px;top:445px;width:1px;height:20px;background:#FFFFFF;"></div><div style="left:210px;top:463px;width:78px;height:1px;background:#ECEEE8;"></div><div style="left:287px;top:446px;width:1px;height:18px;background:#ECEEE8;"></div><div style="left:271px;top:447px;width:16px;height:16px;background:#D4D0C8;"></div><div style="left:271px;top:447px;width:16px;height:1px;background:#D4D0C8;"></div><div style="left:271px;top:447px;width:1px;height:16px;background:#D4D0C8;"></div><div style="left:271px;top:462px;width:16px;height:1px;background:#404040;"></div><div style="left:286px;top:447px;width:1px;height:16px;background:#404040;"></div><div style="left:272px;top:461px;width:14px;height:1px;background:#808080;"></div><div style="left:285px;top:448px;width:1px;height:14px;background:#808080;"></div><div style="left:272px;top:448px;width:14px;height:1px;background:#FFFFFF;"></div><div style="left:272px;top:448px;width:1px;height:14px;background:#FFFFFF;"></div><div class="t" style="left:214.75px;top:449px;transform:scaleX(0.9190);">Nap</div><div style="left:209px;top:465px;width:80px;height:20px;background:#CCFEB8;"></div><div style="left:209px;top:465px;width:80px;height:1px;background:#808080;"></div><div style="left:209px;top:465px;width:1px;height:20px;background:#808080;"></div><div style="left:210px;top:466px;width:78px;height:1px;background:#404040;"></div><div style="left:210px;top:466px;width:1px;height:18px;background:#404040;"></div><div style="left:209px;top:484px;width:80px;height:1px;background:#FFFFFF;"></div><div style="left:288px;top:465px;width:1px;height:20px;background:#FFFFFF;"></div><div style="left:210px;top:483px;width:78px;height:1px;background:#ECEEE8;"></div><div style="left:287px;top:466px;width:1px;height:18px;background:#ECEEE8;"></div><div style="left:271px;top:467px;width:16px;height:16px;background:#D4D0C8;"></div><div style="left:271px;top:467px;width:16px;height:1px;background:#D4D0C8;"></div><div style="left:271px;top:467px;width:1px;height:16px;background:#D4D0C8;"></div><div style="left:271px;top:482px;width:16px;height:1px;background:#404040;"></div><div style="left:286px;top:467px;width:1px;height:16px;background:#404040;"></div><div style="left:272px;top:481px;width:14px;height:1px;background:#808080;"></div><div style="left:285px;top:468px;width:1px;height:14px;background:#808080;"></div><div style="left:272px;top:468px;width:14px;height:1px;background:#FFFFFF;"></div><div style="left:272px;top:468px;width:1px;height:14px;background:#FFFFFF;"></div><div class="t" style="left:214.75px;top:469px;transform:scaleX(0.9190);">Nap</div><div style="left:209px;top:485px;width:80px;height:20px;background:#CCFEB8;"></div><div style="left:209px;top:485px;width:80px;height:1px;background:#808080;"></div><div style="left:209px;top:485px;width:1px;height:20px;background:#808080;"></div><div style="left:210px;top:486px;width:78px;height:1px;background:#404040;"></div><div style="left:210px;top:486px;width:1px;height:18px;background:#404040;"></div><div style="left:209px;top:504px;width:80px;height:1px;background:#FFFFFF;"></div><div style="left:288px;top:485px;width:1px;height:20px;background:#FFFFFF;"></div><div style="left:210px;top:503px;width:78px;height:1px;background:#ECEEE8;"></div><div style="left:287px;top:486px;width:1px;height:18px;background:#ECEEE8;"></div><div style="left:271px;top:487px;width:16px;height:16px;background:#D4D0C8;"></div><div style="left:271px;top:487px;width:16px;height:1px;background:#D4D0C8;"></div><div style="left:271px;top:487px;width:1px;height:16px;background:#D4D0C8;"></div><div style="left:271px;top:502px;width:16px;height:1px;background:#404040;"></div><div style="left:286px;top:487px;width:1px;height:16px;background:#404040;"></div><div style="left:272px;top:501px;width:14px;height:1px;background:#808080;"></div><div style="left:285px;top:488px;width:1px;height:14px;background:#808080;"></div><div style="left:272px;top:488px;width:14px;height:1px;background:#FFFFFF;"></div><div style="left:272px;top:488px;width:1px;height:14px;background:#FFFFFF;"></div><div class="t" style="left:214.75px;top:489px;transform:scaleX(0.9190);">Nap</div><div style="left:289px;top:167px;width:22px;height:1px;background:#808080;"></div><div style="left:290px;top:168px;width:22px;height:1px;background:#FFFFFF;"></div><div style="left:289px;top:167px;width:1px;height:27px;background:#808080;"></div><div style="left:290px;top:168px;width:1px;height:27px;background:#FFFFFF;"></div><div style="left:289px;top:193px;width:22px;height:1px;background:#808080;"></div><div style="left:289px;top:194px;width:23px;height:1px;background:#FFFFFF;"></div><div style="left:310px;top:167px;width:1px;height:27px;background:#808080;"></div><div style="left:311px;top:167px;width:1px;height:28px;background:#FFFFFF;"></div><div style="left:289px;top:195px;width:22px;height:1px;background:#808080;"></div><div style="left:290px;top:196px;width:22px;height:1px;background:#FFFFFF;"></div><div style="left:289px;top:195px;width:1px;height:27px;background:#808080;"></div><div style="left:290px;top:196px;width:1px;height:27px;background:#FFFFFF;"></div><div style="left:289px;top:221px;width:22px;height:1px;background:#808080;"></div><div style="left:289px;top:222px;width:23px;height:1px;background:#FFFFFF;"></div><div style="left:310px;top:195px;width:1px;height:27px;background:#808080;"></div><div style="left:311px;top:195px;width:1px;height:28px;background:#FFFFFF;"></div><div style="left:289px;top:223px;width:22px;height:1px;background:#808080;"></div><div style="left:290px;top:224px;width:22px;height:1px;background:#FFFFFF;"></div><div style="left:289px;top:223px;width:1px;height:27px;background:#808080;"></div><div style="left:290px;top:224px;width:1px;height:27px;background:#FFFFFF;"></div><div style="left:289px;top:249px;width:22px;height:1px;background:#808080;"></div><div style="left:289px;top:250px;width:23px;height:1px;background:#FFFFFF;"></div><div style="left:310px;top:223px;width:1px;height:27px;background:#808080;"></div><div style="left:311px;top:223px;width:1px;height:28px;background:#FFFFFF;"></div><div style="left:289px;top:251px;width:22px;height:1px;background:#808080;"></div><div style="left:290px;top:252px;width:22px;height:1px;background:#FFFFFF;"></div><div style="left:289px;top:251px;width:1px;height:27px;background:#808080;"></div><div style="left:290px;top:252px;width:1px;height:27px;background:#FFFFFF;"></div><div style="left:289px;top:277px;width:22px;height:1px;background:#808080;"></div><div style="left:289px;top:278px;width:23px;height:1px;background:#FFFFFF;"></div><div style="left:310px;top:251px;width:1px;height:27px;background:#808080;"></div><div style="left:311px;top:251px;width:1px;height:28px;background:#FFFFFF;"></div><div style="left:289px;top:279px;width:22px;height:1px;background:#808080;"></div><div style="left:290px;top:280px;width:22px;height:1px;background:#FFFFFF;"></div><div style="left:289px;top:279px;width:1px;height:27px;background:#808080;"></div><div style="left:290px;top:280px;width:1px;height:27px;background:#FFFFFF;"></div><div style="left:289px;top:305px;width:22px;height:1px;background:#808080;"></div><div style="left:289px;top:306px;width:23px;height:1px;background:#FFFFFF;"></div><div style="left:310px;top:279px;width:1px;height:27px;background:#808080;"></div><div style="left:311px;top:279px;width:1px;height:28px;background:#FFFFFF;"></div><div style="left:289px;top:307px;width:22px;height:1px;background:#808080;"></div><div style="left:290px;top:308px;width:22px;height:1px;background:#FFFFFF;"></div><div style="left:289px;top:307px;width:1px;height:27px;background:#808080;"></div><div style="left:290px;top:308px;width:1px;height:27px;background:#FFFFFF;"></div><div style="left:289px;top:333px;width:22px;height:1px;background:#808080;"></div><div style="left:289px;top:334px;width:23px;height:1px;background:#FFFFFF;"></div><div style="left:310px;top:307px;width:1px;height:27px;background:#808080;"></div><div style="left:311px;top:307px;width:1px;height:28px;background:#FFFFFF;"></div><div style="left:289px;top:335px;width:22px;height:1px;background:#808080;"></div><div style="left:290px;top:336px;width:22px;height:1px;background:#FFFFFF;"></div><div style="left:289px;top:335px;width:1px;height:27px;background:#808080;"></div><div style="left:290px;top:336px;width:1px;height:27px;background:#FFFFFF;"></div><div style="left:289px;top:361px;width:22px;height:1px;background:#808080;"></div><div style="left:289px;top:362px;width:23px;height:1px;background:#FFFFFF;"></div><div style="left:310px;top:335px;width:1px;height:27px;background:#808080;"></div><div style="left:311px;top:335px;width:1px;height:28px;background:#FFFFFF;"></div><div style="left:289px;top:363px;width:22px;height:1px;background:#808080;"></div><div style="left:290px;top:364px;width:22px;height:1px;background:#FFFFFF;"></div><div style="left:289px;top:363px;width:1px;height:27px;background:#808080;"></div><div style="left:290px;top:364px;width:1px;height:27px;background:#FFFFFF;"></div><div style="left:289px;top:389px;width:22px;height:1px;background:#808080;"></div><div style="left:289px;top:390px;width:23px;height:1px;background:#FFFFFF;"></div><div style="left:310px;top:363px;width:1px;height:27px;background:#808080;"></div><div style="left:311px;top:363px;width:1px;height:28px;background:#FFFFFF;"></div><div style="left:289px;top:391px;width:22px;height:1px;background:#808080;"></div><div style="left:290px;top:392px;width:22px;height:1px;background:#FFFFFF;"></div><div style="left:289px;top:391px;width:1px;height:33px;background:#808080;"></div><div style="left:290px;top:392px;width:1px;height:33px;background:#FFFFFF;"></div><div style="left:289px;top:423px;width:22px;height:1px;background:#808080;"></div><div style="left:289px;top:424px;width:23px;height:1px;background:#FFFFFF;"></div><div style="left:310px;top:391px;width:1px;height:33px;background:#808080;"></div><div style="left:311px;top:391px;width:1px;height:34px;background:#FFFFFF;"></div><div style="left:289px;top:425px;width:22px;height:1px;background:#808080;"></div><div style="left:290px;top:426px;width:22px;height:1px;background:#FFFFFF;"></div><div style="left:289px;top:425px;width:1px;height:39px;background:#808080;"></div><div style="left:290px;top:426px;width:1px;height:39px;background:#FFFFFF;"></div><div style="left:289px;top:463px;width:22px;height:1px;background:#808080;"></div><div style="left:289px;top:464px;width:23px;height:1px;background:#FFFFFF;"></div><div style="left:310px;top:425px;width:1px;height:39px;background:#808080;"></div><div style="left:311px;top:425px;width:1px;height:40px;background:#FFFFFF;"></div><div style="left:289px;top:465px;width:22px;height:1px;background:#808080;"></div><div style="left:290px;top:466px;width:22px;height:1px;background:#FFFFFF;"></div><div style="left:289px;top:465px;width:1px;height:39px;background:#808080;"></div><div style="left:290px;top:466px;width:1px;height:39px;background:#FFFFFF;"></div><div style="left:289px;top:503px;width:22px;height:1px;background:#808080;"></div><div style="left:289px;top:504px;width:23px;height:1px;background:#FFFFFF;"></div><div style="left:310px;top:465px;width:1px;height:39px;background:#808080;"></div><div style="left:311px;top:465px;width:1px;height:40px;background:#FFFFFF;"></div><div style="left:289px;top:505px;width:22px;height:1px;background:#808080;"></div><div style="left:290px;top:506px;width:22px;height:1px;background:#FFFFFF;"></div><div style="left:289px;top:505px;width:1px;height:27px;background:#808080;"></div><div style="left:290px;top:506px;width:1px;height:27px;background:#FFFFFF;"></div><div style="left:289px;top:531px;width:22px;height:1px;background:#808080;"></div><div style="left:289px;top:532px;width:23px;height:1px;background:#FFFFFF;"></div><div style="left:310px;top:505px;width:1px;height:27px;background:#808080;"></div><div style="left:311px;top:505px;width:1px;height:28px;background:#FFFFFF;"></div><div style="left:289px;top:533px;width:22px;height:1px;background:#808080;"></div><div style="left:290px;top:534px;width:22px;height:1px;background:#FFFFFF;"></div><div style="left:289px;top:533px;width:1px;height:27px;background:#808080;"></div><div style="left:290px;top:534px;width:1px;height:27px;background:#FFFFFF;"></div><div style="left:289px;top:559px;width:22px;height:1px;background:#808080;"></div><div style="left:289px;top:560px;width:23px;height:1px;background:#FFFFFF;"></div><div style="left:310px;top:533px;width:1px;height:27px;background:#808080;"></div><div style="left:311px;top:533px;width:1px;height:28px;background:#FFFFFF;"></div><div style="left:289px;top:561px;width:22px;height:1px;background:#808080;"></div><div style="left:290px;top:562px;width:22px;height:1px;background:#FFFFFF;"></div><div style="left:289px;top:561px;width:1px;height:27px;background:#808080;"></div><div style="left:290px;top:562px;width:1px;height:27px;background:#FFFFFF;"></div><div style="left:289px;top:587px;width:22px;height:1px;background:#808080;"></div><div style="left:289px;top:588px;width:23px;height:1px;background:#FFFFFF;"></div><div style="left:310px;top:561px;width:1px;height:27px;background:#808080;"></div><div style="left:311px;top:561px;width:1px;height:28px;background:#FFFFFF;"></div><div style="left:289px;top:589px;width:22px;height:1px;background:#808080;"></div><div style="left:290px;top:590px;width:22px;height:1px;background:#FFFFFF;"></div><div style="left:289px;top:589px;width:1px;height:27px;background:#808080;"></div><div style="left:290px;top:590px;width:1px;height:27px;background:#FFFFFF;"></div><div style="left:289px;top:615px;width:22px;height:1px;background:#808080;"></div><div style="left:289px;top:616px;width:23px;height:1px;background:#FFFFFF;"></div><div style="left:310px;top:589px;width:1px;height:27px;background:#808080;"></div><div style="left:311px;top:589px;width:1px;height:28px;background:#FFFFFF;"></div><div style="left:289px;top:617px;width:22px;height:1px;background:#808080;"></div><div style="left:290px;top:618px;width:22px;height:1px;background:#FFFFFF;"></div><div style="left:289px;top:617px;width:1px;height:22px;background:#808080;"></div><div style="left:290px;top:618px;width:1px;height:22px;background:#FFFFFF;"></div><div style="left:289px;top:638px;width:22px;height:1px;background:#808080;"></div><div style="left:289px;top:639px;width:23px;height:1px;background:#FFFFFF;"></div><div style="left:310px;top:617px;width:1px;height:22px;background:#808080;"></div><div style="left:311px;top:617px;width:1px;height:23px;background:#FFFFFF;"></div><div style="left:336px;top:167px;width:13px;height:13px;background:#CCFEB8;"></div><div style="left:336px;top:167px;width:13px;height:1px;background:#808080;"></div><div style="left:336px;top:167px;width:1px;height:13px;background:#808080;"></div><div style="left:337px;top:168px;width:11px;height:1px;background:#404040;"></div><div style="left:337px;top:168px;width:1px;height:11px;background:#404040;"></div><div style="left:336px;top:179px;width:13px;height:1px;background:#FFFFFF;"></div><div style="left:348px;top:167px;width:1px;height:13px;background:#FFFFFF;"></div><div style="left:337px;top:178px;width:11px;height:1px;background:#ECEEE8;"></div><div style="left:347px;top:168px;width:1px;height:11px;background:#ECEEE8;"></div><div class="t" style="left:355.0px;top:168px;transform:scaleX(0.8919);">Ágazat</div><div style="left:336px;top:181px;width:13px;height:13px;background:#CCFEB8;"></div><div style="left:336px;top:181px;width:13px;height:1px;background:#808080;"></div><div style="left:336px;top:181px;width:1px;height:13px;background:#808080;"></div><div style="left:337px;top:182px;width:11px;height:1px;background:#404040;"></div><div style="left:337px;top:182px;width:1px;height:11px;background:#404040;"></div><div style="left:336px;top:193px;width:13px;height:1px;background:#FFFFFF;"></div><div style="left:348px;top:181px;width:1px;height:13px;background:#FFFFFF;"></div><div style="left:337px;top:192px;width:11px;height:1px;background:#ECEEE8;"></div><div style="left:347px;top:182px;width:1px;height:11px;background:#ECEEE8;"></div><div class="t" style="left:355.0px;top:182px;transform:scaleX(0.8846);">Szervezet</div><div style="left:336px;top:195px;width:13px;height:13px;background:#CCFEB8;"></div><div style="left:336px;top:195px;width:13px;height:1px;background:#808080;"></div><div style="left:336px;top:195px;width:1px;height:13px;background:#808080;"></div><div style="left:337px;top:196px;width:11px;height:1px;background:#404040;"></div><div style="left:337px;top:196px;width:1px;height:11px;background:#404040;"></div><div style="left:336px;top:207px;width:13px;height:1px;background:#FFFFFF;"></div><div style="left:348px;top:195px;width:1px;height:13px;background:#FFFFFF;"></div><div style="left:337px;top:206px;width:11px;height:1px;background:#ECEEE8;"></div><div style="left:347px;top:196px;width:1px;height:11px;background:#ECEEE8;"></div><div class="t" style="left:355.0px;top:196px;transform:scaleX(0.8556);">Fázis</div><div style="left:336px;top:209px;width:13px;height:13px;background:#CCFEB8;"></div><div style="left:336px;top:209px;width:13px;height:1px;background:#808080;"></div><div style="left:336px;top:209px;width:1px;height:13px;background:#808080;"></div><div style="left:337px;top:210px;width:11px;height:1px;background:#404040;"></div><div style="left:337px;top:210px;width:1px;height:11px;background:#404040;"></div><div style="left:336px;top:221px;width:13px;height:1px;background:#FFFFFF;"></div><div style="left:348px;top:209px;width:1px;height:13px;background:#FFFFFF;"></div><div style="left:337px;top:220px;width:11px;height:1px;background:#ECEEE8;"></div><div style="left:347px;top:210px;width:1px;height:11px;background:#ECEEE8;"></div><div class="t" style="left:355.0px;top:210px;transform:scaleX(0.9080);">Technológiai előírás</div><div style="left:336px;top:223px;width:13px;height:13px;background:#CCFEB8;"></div><div style="left:336px;top:223px;width:13px;height:1px;background:#808080;"></div><div style="left:336px;top:223px;width:1px;height:13px;background:#808080;"></div><div style="left:337px;top:224px;width:11px;height:1px;background:#404040;"></div><div style="left:337px;top:224px;width:1px;height:11px;background:#404040;"></div><div style="left:336px;top:235px;width:13px;height:1px;background:#FFFFFF;"></div><div style="left:348px;top:223px;width:1px;height:13px;background:#FFFFFF;"></div><div style="left:337px;top:234px;width:11px;height:1px;background:#ECEEE8;"></div><div style="left:347px;top:224px;width:1px;height:11px;background:#ECEEE8;"></div><div class="t" style="left:355.0px;top:224px;transform:scaleX(0.8809);">Gyártási utasítás</div><div style="left:336px;top:237px;width:13px;height:13px;background:#CCFEB8;"></div><div style="left:336px;top:237px;width:13px;height:1px;background:#808080;"></div><div style="left:336px;top:237px;width:1px;height:13px;background:#808080;"></div><div style="left:337px;top:238px;width:11px;height:1px;background:#404040;"></div><div style="left:337px;top:238px;width:1px;height:11px;background:#404040;"></div><div style="left:336px;top:249px;width:13px;height:1px;background:#FFFFFF;"></div><div style="left:348px;top:237px;width:1px;height:13px;background:#FFFFFF;"></div><div style="left:337px;top:248px;width:11px;height:1px;background:#ECEEE8;"></div><div style="left:347px;top:238px;width:1px;height:11px;background:#ECEEE8;"></div><div class="t" style="left:355.0px;top:238px;transform:scaleX(0.9323);">Tevékenység típus</div><div style="left:336px;top:251px;width:13px;height:13px;background:#CCFEB8;"></div><div style="left:336px;top:251px;width:13px;height:1px;background:#808080;"></div><div style="left:336px;top:251px;width:1px;height:13px;background:#808080;"></div><div style="left:337px;top:252px;width:11px;height:1px;background:#404040;"></div><div style="left:337px;top:252px;width:1px;height:11px;background:#404040;"></div><div style="left:336px;top:263px;width:13px;height:1px;background:#FFFFFF;"></div><div style="left:348px;top:251px;width:1px;height:13px;background:#FFFFFF;"></div><div style="left:337px;top:262px;width:11px;height:1px;background:#ECEEE8;"></div><div style="left:347px;top:252px;width:1px;height:11px;background:#ECEEE8;"></div><div class="t" style="left:355.0px;top:252px;transform:scaleX(0.9102);">Technológiai lépés</div><div style="left:336px;top:265px;width:13px;height:13px;background:#CCFEB8;"></div><div style="left:336px;top:265px;width:13px;height:1px;background:#808080;"></div><div style="left:336px;top:265px;width:1px;height:13px;background:#808080;"></div><div style="left:337px;top:266px;width:11px;height:1px;background:#404040;"></div><div style="left:337px;top:266px;width:1px;height:11px;background:#404040;"></div><div style="left:336px;top:277px;width:13px;height:1px;background:#FFFFFF;"></div><div style="left:348px;top:265px;width:1px;height:13px;background:#FFFFFF;"></div><div style="left:337px;top:276px;width:11px;height:1px;background:#ECEEE8;"></div><div style="left:347px;top:266px;width:1px;height:11px;background:#ECEEE8;"></div><div class="t" style="left:355.0px;top:266px;transform:scaleX(0.9049);">Művelet</div><div style="left:336px;top:293px;width:13px;height:13px;background:#CCFEB8;"></div><div style="left:336px;top:293px;width:13px;height:1px;background:#808080;"></div><div style="left:336px;top:293px;width:1px;height:13px;background:#808080;"></div><div style="left:337px;top:294px;width:11px;height:1px;background:#404040;"></div><div style="left:337px;top:294px;width:1px;height:11px;background:#404040;"></div><div style="left:336px;top:305px;width:13px;height:1px;background:#FFFFFF;"></div><div style="left:348px;top:293px;width:1px;height:13px;background:#FFFFFF;"></div><div style="left:337px;top:304px;width:11px;height:1px;background:#ECEEE8;"></div><div style="left:347px;top:294px;width:1px;height:11px;background:#ECEEE8;"></div><div class="t" style="left:355.0px;top:294px;transform:scaleX(0.8800);">Faj</div><div style="left:336px;top:307px;width:13px;height:13px;background:#CCFEB8;"></div><div style="left:336px;top:307px;width:13px;height:1px;background:#808080;"></div><div style="left:336px;top:307px;width:1px;height:13px;background:#808080;"></div><div style="left:337px;top:308px;width:11px;height:1px;background:#404040;"></div><div style="left:337px;top:308px;width:1px;height:11px;background:#404040;"></div><div style="left:336px;top:319px;width:13px;height:1px;background:#FFFFFF;"></div><div style="left:348px;top:307px;width:1px;height:13px;background:#FFFFFF;"></div><div style="left:337px;top:318px;width:11px;height:1px;background:#ECEEE8;"></div><div style="left:347px;top:308px;width:1px;height:11px;background:#ECEEE8;"></div><div class="t" style="left:355.0px;top:308px;transform:scaleX(0.8754);">Kidolgozás</div><div style="left:336px;top:321px;width:13px;height:13px;background:#CCFEB8;"></div><div style="left:336px;top:321px;width:13px;height:1px;background:#808080;"></div><div style="left:336px;top:321px;width:1px;height:13px;background:#808080;"></div><div style="left:337px;top:322px;width:11px;height:1px;background:#404040;"></div><div style="left:337px;top:322px;width:1px;height:11px;background:#404040;"></div><div style="left:336px;top:333px;width:13px;height:1px;background:#FFFFFF;"></div><div style="left:348px;top:321px;width:1px;height:13px;background:#FFFFFF;"></div><div style="left:337px;top:332px;width:11px;height:1px;background:#ECEEE8;"></div><div style="left:347px;top:322px;width:1px;height:11px;background:#ECEEE8;"></div><div class="t" style="left:355.0px;top:322px;transform:scaleX(0.8816);">Készültség</div><div style="left:336px;top:335px;width:13px;height:13px;background:#CCFEB8;"></div><div style="left:336px;top:335px;width:13px;height:1px;background:#808080;"></div><div style="left:336px;top:335px;width:1px;height:13px;background:#808080;"></div><div style="left:337px;top:336px;width:11px;height:1px;background:#404040;"></div><div style="left:337px;top:336px;width:1px;height:11px;background:#404040;"></div><div style="left:336px;top:347px;width:13px;height:1px;background:#FFFFFF;"></div><div style="left:348px;top:335px;width:1px;height:13px;background:#FFFFFF;"></div><div style="left:337px;top:346px;width:11px;height:1px;background:#ECEEE8;"></div><div style="left:347px;top:336px;width:1px;height:11px;background:#ECEEE8;"></div><div class="t" style="left:355.0px;top:336px;transform:scaleX(0.8975);">Termékcsoport</div><div style="left:336px;top:349px;width:13px;height:13px;background:#CCFEB8;"></div><div style="left:336px;top:349px;width:13px;height:1px;background:#808080;"></div><div style="left:336px;top:349px;width:1px;height:13px;background:#808080;"></div><div style="left:337px;top:350px;width:11px;height:1px;background:#404040;"></div><div style="left:337px;top:350px;width:1px;height:11px;background:#404040;"></div><div style="left:336px;top:361px;width:13px;height:1px;background:#FFFFFF;"></div><div style="left:348px;top:349px;width:1px;height:13px;background:#FFFFFF;"></div><div style="left:337px;top:360px;width:11px;height:1px;background:#ECEEE8;"></div><div style="left:347px;top:350px;width:1px;height:11px;background:#ECEEE8;"></div><div class="t" style="left:355.0px;top:350px;transform:scaleX(0.8656);">Fizikai jelleg</div><div style="left:336px;top:363px;width:13px;height:13px;background:#CCFEB8;"></div><div style="left:336px;top:363px;width:13px;height:1px;background:#808080;"></div><div style="left:336px;top:363px;width:1px;height:13px;background:#808080;"></div><div style="left:337px;top:364px;width:11px;height:1px;background:#404040;"></div><div style="left:337px;top:364px;width:1px;height:11px;background:#404040;"></div><div style="left:336px;top:375px;width:13px;height:1px;background:#FFFFFF;"></div><div style="left:348px;top:363px;width:1px;height:13px;background:#FFFFFF;"></div><div style="left:337px;top:374px;width:11px;height:1px;background:#ECEEE8;"></div><div style="left:347px;top:364px;width:1px;height:11px;background:#ECEEE8;"></div><div class="t" style="left:355.0px;top:364px;transform:scaleX(0.9692);">Vevő</div><div style="left:336px;top:377px;width:13px;height:13px;background:#CCFEB8;"></div><div style="left:336px;top:377px;width:13px;height:1px;background:#808080;"></div><div style="left:336px;top:377px;width:1px;height:13px;background:#808080;"></div><div style="left:337px;top:378px;width:11px;height:1px;background:#404040;"></div><div style="left:337px;top:378px;width:1px;height:11px;background:#404040;"></div><div style="left:336px;top:389px;width:13px;height:1px;background:#FFFFFF;"></div><div style="left:348px;top:377px;width:1px;height:13px;background:#FFFFFF;"></div><div style="left:337px;top:388px;width:11px;height:1px;background:#ECEEE8;"></div><div style="left:347px;top:378px;width:1px;height:11px;background:#ECEEE8;"></div><div class="t" style="left:355.0px;top:378px;transform:scaleX(0.9156);">Márka</div><div style="left:336px;top:391px;width:13px;height:13px;background:#CCFEB8;"></div><div style="left:336px;top:391px;width:13px;height:1px;background:#808080;"></div><div style="left:336px;top:391px;width:1px;height:13px;background:#808080;"></div><div style="left:337px;top:392px;width:11px;height:1px;background:#404040;"></div><div style="left:337px;top:392px;width:1px;height:11px;background:#404040;"></div><div style="left:336px;top:403px;width:13px;height:1px;background:#FFFFFF;"></div><div style="left:348px;top:391px;width:1px;height:13px;background:#FFFFFF;"></div><div style="left:337px;top:402px;width:11px;height:1px;background:#ECEEE8;"></div><div style="left:347px;top:392px;width:1px;height:11px;background:#ECEEE8;"></div><div class="t" style="left:355.0px;top:392px;transform:scaleX(0.8664);">Belföldi termék osztály</div><div style="left:336px;top:408px;width:13px;height:13px;background:#CCFEB8;"></div><div style="left:336px;top:408px;width:13px;height:1px;background:#808080;"></div><div style="left:336px;top:408px;width:1px;height:13px;background:#808080;"></div><div style="left:337px;top:409px;width:11px;height:1px;background:#404040;"></div><div style="left:337px;top:409px;width:1px;height:11px;background:#404040;"></div><div style="left:336px;top:420px;width:13px;height:1px;background:#FFFFFF;"></div><div style="left:348px;top:408px;width:1px;height:13px;background:#FFFFFF;"></div><div style="left:337px;top:419px;width:11px;height:1px;background:#ECEEE8;"></div><div style="left:347px;top:409px;width:1px;height:11px;background:#ECEEE8;"></div><div class="t" style="left:355.0px;top:409px;transform:scaleX(0.8931);">Kalkulációs egység</div><div style="left:336px;top:428px;width:13px;height:13px;background:#CCFEB8;"></div><div style="left:336px;top:428px;width:13px;height:1px;background:#808080;"></div><div style="left:336px;top:428px;width:1px;height:13px;background:#808080;"></div><div style="left:337px;top:429px;width:11px;height:1px;background:#404040;"></div><div style="left:337px;top:429px;width:1px;height:11px;background:#404040;"></div><div style="left:336px;top:440px;width:13px;height:1px;background:#FFFFFF;"></div><div style="left:348px;top:428px;width:1px;height:13px;background:#FFFFFF;"></div><div style="left:337px;top:439px;width:11px;height:1px;background:#ECEEE8;"></div><div style="left:347px;top:429px;width:1px;height:11px;background:#ECEEE8;"></div><div class="t" style="left:355.0px;top:429px;transform:scaleX(0.9279);">Termék típus</div><div style="left:336px;top:448px;width:13px;height:13px;background:#CCFEB8;"></div><div style="left:336px;top:448px;width:13px;height:1px;background:#808080;"></div><div style="left:336px;top:448px;width:1px;height:13px;background:#808080;"></div><div style="left:337px;top:449px;width:11px;height:1px;background:#404040;"></div><div style="left:337px;top:449px;width:1px;height:11px;background:#404040;"></div><div style="left:336px;top:460px;width:13px;height:1px;background:#FFFFFF;"></div><div style="left:348px;top:448px;width:1px;height:13px;background:#FFFFFF;"></div><div style="left:337px;top:459px;width:11px;height:1px;background:#ECEEE8;"></div><div style="left:347px;top:449px;width:1px;height:11px;background:#ECEEE8;"></div><div class="t" style="left:355.0px;top:449px;transform:scaleX(0.9154);">Termék</div><div style="left:336px;top:468px;width:13px;height:13px;background:#CCFEB8;"></div><div style="left:336px;top:468px;width:13px;height:1px;background:#808080;"></div><div style="left:336px;top:468px;width:1px;height:13px;background:#808080;"></div><div style="left:337px;top:469px;width:11px;height:1px;background:#404040;"></div><div style="left:337px;top:469px;width:1px;height:11px;background:#404040;"></div><div style="left:336px;top:480px;width:13px;height:1px;background:#FFFFFF;"></div><div style="left:348px;top:468px;width:1px;height:13px;background:#FFFFFF;"></div><div style="left:337px;top:479px;width:11px;height:1px;background:#ECEEE8;"></div><div style="left:347px;top:469px;width:1px;height:11px;background:#ECEEE8;"></div><div class="t" style="left:355.0px;top:469px;transform:scaleX(0.8885);">Értékesítési árucsoport</div><div style="left:336px;top:488px;width:13px;height:13px;background:#CCFEB8;"></div><div style="left:336px;top:488px;width:13px;height:1px;background:#808080;"></div><div style="left:336px;top:488px;width:1px;height:13px;background:#808080;"></div><div style="left:337px;top:489px;width:11px;height:1px;background:#404040;"></div><div style="left:337px;top:489px;width:1px;height:11px;background:#404040;"></div><div style="left:336px;top:500px;width:13px;height:1px;background:#FFFFFF;"></div><div style="left:348px;top:488px;width:1px;height:13px;background:#FFFFFF;"></div><div style="left:337px;top:499px;width:11px;height:1px;background:#ECEEE8;"></div><div style="left:347px;top:489px;width:1px;height:11px;background:#ECEEE8;"></div><div class="t" style="left:355.0px;top:489px;transform:scaleX(0.8559);">Szorta</div><div style="left:336px;top:505px;width:13px;height:13px;background:#CCFEB8;"></div><div style="left:336px;top:505px;width:13px;height:1px;background:#808080;"></div><div style="left:336px;top:505px;width:1px;height:13px;background:#808080;"></div><div style="left:337px;top:506px;width:11px;height:1px;background:#404040;"></div><div style="left:337px;top:506px;width:1px;height:11px;background:#404040;"></div><div style="left:336px;top:517px;width:13px;height:1px;background:#FFFFFF;"></div><div style="left:348px;top:505px;width:1px;height:13px;background:#FFFFFF;"></div><div style="left:337px;top:516px;width:11px;height:1px;background:#ECEEE8;"></div><div style="left:347px;top:506px;width:1px;height:11px;background:#ECEEE8;"></div><div class="t" style="left:355.0px;top:506px;transform:scaleX(0.8689);">Gyűjtő kiszerelés</div><div style="left:336px;top:519px;width:13px;height:13px;background:#CCFEB8;"></div><div style="left:336px;top:519px;width:13px;height:1px;background:#808080;"></div><div style="left:336px;top:519px;width:1px;height:13px;background:#808080;"></div><div style="left:337px;top:520px;width:11px;height:1px;background:#404040;"></div><div style="left:337px;top:520px;width:1px;height:11px;background:#404040;"></div><div style="left:336px;top:531px;width:13px;height:1px;background:#FFFFFF;"></div><div style="left:348px;top:519px;width:1px;height:13px;background:#FFFFFF;"></div><div style="left:337px;top:530px;width:11px;height:1px;background:#ECEEE8;"></div><div style="left:347px;top:520px;width:1px;height:11px;background:#ECEEE8;"></div><div class="t" style="left:355.0px;top:520px;transform:scaleX(0.8707);">Egyedi kiszerelés</div><div style="left:336px;top:547px;width:13px;height:13px;background:#CCFEB8;"></div><div style="left:336px;top:547px;width:13px;height:1px;background:#808080;"></div><div style="left:336px;top:547px;width:1px;height:13px;background:#808080;"></div><div style="left:337px;top:548px;width:11px;height:1px;background:#404040;"></div><div style="left:337px;top:548px;width:1px;height:11px;background:#404040;"></div><div style="left:336px;top:559px;width:13px;height:1px;background:#FFFFFF;"></div><div style="left:348px;top:547px;width:1px;height:13px;background:#FFFFFF;"></div><div style="left:337px;top:558px;width:11px;height:1px;background:#ECEEE8;"></div><div style="left:347px;top:548px;width:1px;height:11px;background:#ECEEE8;"></div><div class="t" style="left:355.0px;top:548px;transform:scaleX(0.9111);">Áru</div><div style="left:336px;top:575px;width:13px;height:13px;background:#CCFEB8;"></div><div style="left:336px;top:575px;width:13px;height:1px;background:#808080;"></div><div style="left:336px;top:575px;width:1px;height:13px;background:#808080;"></div><div style="left:337px;top:576px;width:11px;height:1px;background:#404040;"></div><div style="left:337px;top:576px;width:1px;height:11px;background:#404040;"></div><div style="left:336px;top:587px;width:13px;height:1px;background:#FFFFFF;"></div><div style="left:348px;top:575px;width:1px;height:13px;background:#FFFFFF;"></div><div style="left:337px;top:586px;width:11px;height:1px;background:#ECEEE8;"></div><div style="left:347px;top:576px;width:1px;height:11px;background:#ECEEE8;"></div><div class="t" style="left:355.0px;top:576px;transform:scaleX(0.8683);">Áru jegyzék</div><div style="left:336px;top:589px;width:13px;height:13px;background:#CCFEB8;"></div><div style="left:336px;top:589px;width:13px;height:1px;background:#808080;"></div><div style="left:336px;top:589px;width:1px;height:13px;background:#808080;"></div><div style="left:337px;top:590px;width:11px;height:1px;background:#404040;"></div><div style="left:337px;top:590px;width:1px;height:11px;background:#404040;"></div><div style="left:336px;top:601px;width:13px;height:1px;background:#FFFFFF;"></div><div style="left:348px;top:589px;width:1px;height:13px;background:#FFFFFF;"></div><div style="left:337px;top:600px;width:11px;height:1px;background:#ECEEE8;"></div><div style="left:347px;top:590px;width:1px;height:11px;background:#ECEEE8;"></div><div class="t" style="left:355.0px;top:590px;transform:scaleX(0.9058);">Adó kulcs</div><div style="left:336px;top:617px;width:13px;height:13px;background:#CCFEB8;"></div><div style="left:336px;top:617px;width:13px;height:1px;background:#808080;"></div><div style="left:336px;top:617px;width:1px;height:13px;background:#808080;"></div><div style="left:337px;top:618px;width:11px;height:1px;background:#404040;"></div><div style="left:337px;top:618px;width:1px;height:11px;background:#404040;"></div><div style="left:336px;top:629px;width:13px;height:1px;background:#FFFFFF;"></div><div style="left:348px;top:617px;width:1px;height:13px;background:#FFFFFF;"></div><div style="left:337px;top:628px;width:11px;height:1px;background:#ECEEE8;"></div><div style="left:347px;top:618px;width:1px;height:11px;background:#ECEEE8;"></div><div class="t" style="left:355.0px;top:618px;transform:scaleX(0.8762);">Felhasználó</div><div style="left:653px;top:167px;width:13px;height:13px;background:#CCFEB8;"></div><div style="left:653px;top:167px;width:13px;height:1px;background:#808080;"></div><div style="left:653px;top:167px;width:1px;height:13px;background:#808080;"></div><div style="left:654px;top:168px;width:11px;height:1px;background:#404040;"></div><div style="left:654px;top:168px;width:1px;height:11px;background:#404040;"></div><div style="left:653px;top:179px;width:13px;height:1px;background:#FFFFFF;"></div><div style="left:665px;top:167px;width:1px;height:13px;background:#FFFFFF;"></div><div style="left:654px;top:178px;width:11px;height:1px;background:#ECEEE8;"></div><div style="left:664px;top:168px;width:1px;height:11px;background:#ECEEE8;"></div><div class="t" style="left:672.0px;top:168px;transform:scaleX(0.9054);">Mennyiség</div><div style="left:653px;top:181px;width:13px;height:13px;background:#CCFEB8;"></div><div style="left:653px;top:181px;width:13px;height:1px;background:#808080;"></div><div style="left:653px;top:181px;width:1px;height:13px;background:#808080;"></div><div style="left:654px;top:182px;width:11px;height:1px;background:#404040;"></div><div style="left:654px;top:182px;width:1px;height:11px;background:#404040;"></div><div style="left:653px;top:193px;width:13px;height:1px;background:#FFFFFF;"></div><div style="left:665px;top:181px;width:1px;height:13px;background:#FFFFFF;"></div><div style="left:654px;top:192px;width:11px;height:1px;background:#ECEEE8;"></div><div style="left:664px;top:182px;width:1px;height:11px;background:#ECEEE8;"></div><div class="t" style="left:672.0px;top:182px;transform:scaleX(0.8842);">Mennyiségi egység</div><div style="left:653px;top:195px;width:13px;height:13px;background:#CCFEB8;"></div><div style="left:653px;top:195px;width:13px;height:1px;background:#808080;"></div><div style="left:653px;top:195px;width:1px;height:13px;background:#808080;"></div><div style="left:654px;top:196px;width:11px;height:1px;background:#404040;"></div><div style="left:654px;top:196px;width:1px;height:11px;background:#404040;"></div><div style="left:653px;top:207px;width:13px;height:1px;background:#FFFFFF;"></div><div style="left:665px;top:195px;width:1px;height:13px;background:#FFFFFF;"></div><div style="left:654px;top:206px;width:11px;height:1px;background:#ECEEE8;"></div><div style="left:664px;top:196px;width:1px;height:11px;background:#ECEEE8;"></div><div class="t" style="left:672.0px;top:196px;transform:scaleX(0.8600);">Súy</div><div style="left:653px;top:223px;width:13px;height:13px;background:#CCFEB8;"></div><div style="left:653px;top:223px;width:13px;height:1px;background:#808080;"></div><div style="left:653px;top:223px;width:1px;height:13px;background:#808080;"></div><div style="left:654px;top:224px;width:11px;height:1px;background:#404040;"></div><div style="left:654px;top:224px;width:1px;height:11px;background:#404040;"></div><div style="left:653px;top:235px;width:13px;height:1px;background:#FFFFFF;"></div><div style="left:665px;top:223px;width:1px;height:13px;background:#FFFFFF;"></div><div style="left:654px;top:234px;width:11px;height:1px;background:#ECEEE8;"></div><div style="left:664px;top:224px;width:1px;height:11px;background:#ECEEE8;"></div><div class="t" style="left:672.0px;top:224px;transform:scaleX(0.8948);">Nettó érték</div><div style="left:653px;top:237px;width:13px;height:13px;background:#CCFEB8;"></div><div style="left:653px;top:237px;width:13px;height:1px;background:#808080;"></div><div style="left:653px;top:237px;width:1px;height:13px;background:#808080;"></div><div style="left:654px;top:238px;width:11px;height:1px;background:#404040;"></div><div style="left:654px;top:238px;width:1px;height:11px;background:#404040;"></div><div style="left:653px;top:249px;width:13px;height:1px;background:#FFFFFF;"></div><div style="left:665px;top:237px;width:1px;height:13px;background:#FFFFFF;"></div><div style="left:654px;top:248px;width:11px;height:1px;background:#ECEEE8;"></div><div style="left:664px;top:238px;width:1px;height:11px;background:#ECEEE8;"></div><div class="t" style="left:672.0px;top:238px;transform:scaleX(0.8961);">Adó érték</div><div style="left:653px;top:251px;width:13px;height:13px;background:#CCFEB8;"></div><div style="left:653px;top:251px;width:13px;height:1px;background:#808080;"></div><div style="left:653px;top:251px;width:1px;height:13px;background:#808080;"></div><div style="left:654px;top:252px;width:11px;height:1px;background:#404040;"></div><div style="left:654px;top:252px;width:1px;height:11px;background:#404040;"></div><div style="left:653px;top:263px;width:13px;height:1px;background:#FFFFFF;"></div><div style="left:665px;top:251px;width:1px;height:13px;background:#FFFFFF;"></div><div style="left:654px;top:262px;width:11px;height:1px;background:#ECEEE8;"></div><div style="left:664px;top:252px;width:1px;height:11px;background:#ECEEE8;"></div><div class="t" style="left:672.0px;top:252px;transform:scaleX(0.8754);">Bruttó érték</div><div style="left:653px;top:265px;width:13px;height:13px;background:#CCFEB8;"></div><div style="left:653px;top:265px;width:13px;height:1px;background:#808080;"></div><div style="left:653px;top:265px;width:1px;height:13px;background:#808080;"></div><div style="left:654px;top:266px;width:11px;height:1px;background:#404040;"></div><div style="left:654px;top:266px;width:1px;height:11px;background:#404040;"></div><div style="left:653px;top:277px;width:13px;height:1px;background:#FFFFFF;"></div><div style="left:665px;top:265px;width:1px;height:13px;background:#FFFFFF;"></div><div style="left:654px;top:276px;width:11px;height:1px;background:#ECEEE8;"></div><div style="left:664px;top:266px;width:1px;height:11px;background:#ECEEE8;"></div><div class="t" style="left:672.0px;top:266px;transform:scaleX(0.8745);">Átlagos egységár (mennyiség)</div><div style="left:653px;top:279px;width:13px;height:13px;background:#CCFEB8;"></div><div style="left:653px;top:279px;width:13px;height:1px;background:#808080;"></div><div style="left:653px;top:279px;width:1px;height:13px;background:#808080;"></div><div style="left:654px;top:280px;width:11px;height:1px;background:#404040;"></div><div style="left:654px;top:280px;width:1px;height:11px;background:#404040;"></div><div style="left:653px;top:291px;width:13px;height:1px;background:#FFFFFF;"></div><div style="left:665px;top:279px;width:1px;height:13px;background:#FFFFFF;"></div><div style="left:654px;top:290px;width:11px;height:1px;background:#ECEEE8;"></div><div style="left:664px;top:280px;width:1px;height:11px;background:#ECEEE8;"></div><div class="t" style="left:672.0px;top:280px;transform:scaleX(0.8688);">Átlagos egységár (súly)</div><div style="left:653px;top:293px;width:13px;height:13px;background:#CCFEB8;"></div><div style="left:653px;top:293px;width:13px;height:1px;background:#808080;"></div><div style="left:653px;top:293px;width:1px;height:13px;background:#808080;"></div><div style="left:654px;top:294px;width:11px;height:1px;background:#404040;"></div><div style="left:654px;top:294px;width:1px;height:11px;background:#404040;"></div><div style="left:653px;top:305px;width:13px;height:1px;background:#FFFFFF;"></div><div style="left:665px;top:293px;width:1px;height:13px;background:#FFFFFF;"></div><div style="left:654px;top:304px;width:11px;height:1px;background:#ECEEE8;"></div><div style="left:664px;top:294px;width:1px;height:11px;background:#ECEEE8;"></div><div class="t" style="left:672.0px;top:294px;transform:scaleX(0.9065);">Levonható adó érték</div><div style="left:653px;top:307px;width:13px;height:13px;background:#CCFEB8;"></div><div style="left:653px;top:307px;width:13px;height:1px;background:#808080;"></div><div style="left:653px;top:307px;width:1px;height:13px;background:#808080;"></div><div style="left:654px;top:308px;width:11px;height:1px;background:#404040;"></div><div style="left:654px;top:308px;width:1px;height:11px;background:#404040;"></div><div style="left:653px;top:319px;width:13px;height:1px;background:#FFFFFF;"></div><div style="left:665px;top:307px;width:1px;height:13px;background:#FFFFFF;"></div><div style="left:654px;top:318px;width:11px;height:1px;background:#ECEEE8;"></div><div style="left:664px;top:308px;width:1px;height:11px;background:#ECEEE8;"></div><div class="t" style="left:672.0px;top:308px;transform:scaleX(0.8845);">Befizetendő adó érték</div><div style="left:653px;top:321px;width:13px;height:13px;background:#CCFEB8;"></div><div style="left:653px;top:321px;width:13px;height:1px;background:#808080;"></div><div style="left:653px;top:321px;width:1px;height:13px;background:#808080;"></div><div style="left:654px;top:322px;width:11px;height:1px;background:#404040;"></div><div style="left:654px;top:322px;width:1px;height:11px;background:#404040;"></div><div style="left:653px;top:333px;width:13px;height:1px;background:#FFFFFF;"></div><div style="left:665px;top:321px;width:1px;height:13px;background:#FFFFFF;"></div><div style="left:654px;top:332px;width:11px;height:1px;background:#ECEEE8;"></div><div style="left:664px;top:322px;width:1px;height:11px;background:#ECEEE8;"></div><div class="t" style="left:672.0px;top:322px;transform:scaleX(0.8886);">Rendezetlen érték (érték arányosan)</div><div style="left:653px;top:335px;width:13px;height:13px;background:#CCFEB8;"></div><div style="left:653px;top:335px;width:13px;height:1px;background:#808080;"></div><div style="left:653px;top:335px;width:1px;height:13px;background:#808080;"></div><div style="left:654px;top:336px;width:11px;height:1px;background:#404040;"></div><div style="left:654px;top:336px;width:1px;height:11px;background:#404040;"></div><div style="left:653px;top:347px;width:13px;height:1px;background:#FFFFFF;"></div><div style="left:665px;top:335px;width:1px;height:13px;background:#FFFFFF;"></div><div style="left:654px;top:346px;width:11px;height:1px;background:#ECEEE8;"></div><div style="left:664px;top:336px;width:1px;height:11px;background:#ECEEE8;"></div><div class="t" style="left:672.0px;top:336px;transform:scaleX(0.8878);">Pénznem</div><div style="left:653px;top:363px;width:13px;height:13px;background:#CCFEB8;"></div><div style="left:653px;top:363px;width:13px;height:1px;background:#808080;"></div><div style="left:653px;top:363px;width:1px;height:13px;background:#808080;"></div><div style="left:654px;top:364px;width:11px;height:1px;background:#404040;"></div><div style="left:654px;top:364px;width:1px;height:11px;background:#404040;"></div><div style="left:653px;top:375px;width:13px;height:1px;background:#FFFFFF;"></div><div style="left:665px;top:363px;width:1px;height:13px;background:#FFFFFF;"></div><div style="left:654px;top:374px;width:11px;height:1px;background:#ECEEE8;"></div><div style="left:664px;top:364px;width:1px;height:11px;background:#ECEEE8;"></div><div class="t" style="left:672.0px;top:364px;transform:scaleX(0.8955);">Nettó érték (kpn)</div><div style="left:653px;top:377px;width:13px;height:13px;background:#CCFEB8;"></div><div style="left:653px;top:377px;width:13px;height:1px;background:#808080;"></div><div style="left:653px;top:377px;width:1px;height:13px;background:#808080;"></div><div style="left:654px;top:378px;width:11px;height:1px;background:#404040;"></div><div style="left:654px;top:378px;width:1px;height:11px;background:#404040;"></div><div style="left:653px;top:389px;width:13px;height:1px;background:#FFFFFF;"></div><div style="left:665px;top:377px;width:1px;height:13px;background:#FFFFFF;"></div><div style="left:654px;top:388px;width:11px;height:1px;background:#ECEEE8;"></div><div style="left:664px;top:378px;width:1px;height:11px;background:#ECEEE8;"></div><div class="t" style="left:672.0px;top:378px;transform:scaleX(0.9049);">Adó érték (kpn)</div><div style="left:653px;top:391px;width:13px;height:13px;background:#CCFEB8;"></div><div style="left:653px;top:391px;width:13px;height:1px;background:#808080;"></div><div style="left:653px;top:391px;width:1px;height:13px;background:#808080;"></div><div style="left:654px;top:392px;width:11px;height:1px;background:#404040;"></div><div style="left:654px;top:392px;width:1px;height:11px;background:#404040;"></div><div style="left:653px;top:403px;width:13px;height:1px;background:#FFFFFF;"></div><div style="left:665px;top:391px;width:1px;height:13px;background:#FFFFFF;"></div><div style="left:654px;top:402px;width:11px;height:1px;background:#ECEEE8;"></div><div style="left:664px;top:392px;width:1px;height:11px;background:#ECEEE8;"></div><div class="t" style="left:672.0px;top:392px;transform:scaleX(0.8956);">Bruttó érték (kpn)</div><div style="left:653px;top:405px;width:13px;height:13px;background:#CCFEB8;"></div><div style="left:653px;top:405px;width:13px;height:1px;background:#808080;"></div><div style="left:653px;top:405px;width:1px;height:13px;background:#808080;"></div><div style="left:654px;top:406px;width:11px;height:1px;background:#404040;"></div><div style="left:654px;top:406px;width:1px;height:11px;background:#404040;"></div><div style="left:653px;top:417px;width:13px;height:1px;background:#FFFFFF;"></div><div style="left:665px;top:405px;width:1px;height:13px;background:#FFFFFF;"></div><div style="left:654px;top:416px;width:11px;height:1px;background:#ECEEE8;"></div><div style="left:664px;top:406px;width:1px;height:11px;background:#ECEEE8;"></div><div class="t" style="left:672.0px;top:406px;transform:scaleX(0.8709);">Átlagos egységár (mennyiség)(kpn)</div><div style="left:653px;top:419px;width:13px;height:13px;background:#CCFEB8;"></div><div style="left:653px;top:419px;width:13px;height:1px;background:#808080;"></div><div style="left:653px;top:419px;width:1px;height:13px;background:#808080;"></div><div style="left:654px;top:420px;width:11px;height:1px;background:#404040;"></div><div style="left:654px;top:420px;width:1px;height:11px;background:#404040;"></div><div style="left:653px;top:431px;width:13px;height:1px;background:#FFFFFF;"></div><div style="left:665px;top:419px;width:1px;height:13px;background:#FFFFFF;"></div><div style="left:654px;top:430px;width:11px;height:1px;background:#ECEEE8;"></div><div style="left:664px;top:420px;width:1px;height:11px;background:#ECEEE8;"></div><div class="t" style="left:672.0px;top:420px;transform:scaleX(0.8678);">Átlagos egységár (súly)(kpn)</div><div style="left:653px;top:433px;width:13px;height:13px;background:#CCFEB8;"></div><div style="left:653px;top:433px;width:13px;height:1px;background:#808080;"></div><div style="left:653px;top:433px;width:1px;height:13px;background:#808080;"></div><div style="left:654px;top:434px;width:11px;height:1px;background:#404040;"></div><div style="left:654px;top:434px;width:1px;height:11px;background:#404040;"></div><div style="left:653px;top:445px;width:13px;height:1px;background:#FFFFFF;"></div><div style="left:665px;top:433px;width:1px;height:13px;background:#FFFFFF;"></div><div style="left:654px;top:444px;width:11px;height:1px;background:#ECEEE8;"></div><div style="left:664px;top:434px;width:1px;height:11px;background:#ECEEE8;"></div><div class="t" style="left:672.0px;top:434px;transform:scaleX(0.9022);">Levonható adó érték (bpn)</div><div style="left:653px;top:447px;width:13px;height:13px;background:#CCFEB8;"></div><div style="left:653px;top:447px;width:13px;height:1px;background:#808080;"></div><div style="left:653px;top:447px;width:1px;height:13px;background:#808080;"></div><div style="left:654px;top:448px;width:11px;height:1px;background:#404040;"></div><div style="left:654px;top:448px;width:1px;height:11px;background:#404040;"></div><div style="left:653px;top:459px;width:13px;height:1px;background:#FFFFFF;"></div><div style="left:665px;top:447px;width:1px;height:13px;background:#FFFFFF;"></div><div style="left:654px;top:458px;width:11px;height:1px;background:#ECEEE8;"></div><div style="left:664px;top:448px;width:1px;height:11px;background:#ECEEE8;"></div><div class="t" style="left:672.0px;top:448px;transform:scaleX(0.8918);">Befizetendő adó érték (bpn)</div><div style="left:653px;top:461px;width:13px;height:13px;background:#CCFEB8;"></div><div style="left:653px;top:461px;width:13px;height:1px;background:#808080;"></div><div style="left:653px;top:461px;width:1px;height:13px;background:#808080;"></div><div style="left:654px;top:462px;width:11px;height:1px;background:#404040;"></div><div style="left:654px;top:462px;width:1px;height:11px;background:#404040;"></div><div style="left:653px;top:473px;width:13px;height:1px;background:#FFFFFF;"></div><div style="left:665px;top:461px;width:1px;height:13px;background:#FFFFFF;"></div><div style="left:654px;top:472px;width:11px;height:1px;background:#ECEEE8;"></div><div style="left:664px;top:462px;width:1px;height:11px;background:#ECEEE8;"></div><div class="t" style="left:672.0px;top:462px;transform:scaleX(0.8882);">Rendezetlen érték (érték arányosan)(kpn)</div><div style="left:653px;top:489px;width:13px;height:13px;background:#CCFEB8;"></div><div style="left:653px;top:489px;width:13px;height:1px;background:#808080;"></div><div style="left:653px;top:489px;width:1px;height:13px;background:#808080;"></div><div style="left:654px;top:490px;width:11px;height:1px;background:#404040;"></div><div style="left:654px;top:490px;width:1px;height:11px;background:#404040;"></div><div style="left:653px;top:501px;width:13px;height:1px;background:#FFFFFF;"></div><div style="left:665px;top:489px;width:1px;height:13px;background:#FFFFFF;"></div><div style="left:654px;top:500px;width:11px;height:1px;background:#ECEEE8;"></div><div style="left:664px;top:490px;width:1px;height:11px;background:#ECEEE8;"></div><div class="t" style="left:672.0px;top:490px;transform:scaleX(0.8748);">Átlagos árfolyam (kpn)</div><div style="left:653px;top:517px;width:13px;height:13px;background:#CCFEB8;"></div><div style="left:653px;top:517px;width:13px;height:1px;background:#808080;"></div><div style="left:653px;top:517px;width:1px;height:13px;background:#808080;"></div><div style="left:654px;top:518px;width:11px;height:1px;background:#404040;"></div><div style="left:654px;top:518px;width:1px;height:11px;background:#404040;"></div><div style="left:653px;top:529px;width:13px;height:1px;background:#FFFFFF;"></div><div style="left:665px;top:517px;width:1px;height:13px;background:#FFFFFF;"></div><div style="left:654px;top:528px;width:11px;height:1px;background:#ECEEE8;"></div><div style="left:664px;top:518px;width:1px;height:11px;background:#ECEEE8;"></div><div class="t" style="left:672.0px;top:518px;transform:scaleX(0.8678);">Partner adószám</div><div style="left:653px;top:531px;width:13px;height:13px;background:#CCFEB8;"></div><div style="left:653px;top:531px;width:13px;height:1px;background:#808080;"></div><div style="left:653px;top:531px;width:1px;height:13px;background:#808080;"></div><div style="left:654px;top:532px;width:11px;height:1px;background:#404040;"></div><div style="left:654px;top:532px;width:1px;height:11px;background:#404040;"></div><div style="left:653px;top:543px;width:13px;height:1px;background:#FFFFFF;"></div><div style="left:665px;top:531px;width:1px;height:13px;background:#FFFFFF;"></div><div style="left:654px;top:542px;width:11px;height:1px;background:#ECEEE8;"></div><div style="left:664px;top:532px;width:1px;height:11px;background:#ECEEE8;"></div><div class="t" style="left:672.0px;top:532px;transform:scaleX(0.8774);">Partner közösségi adószám</div><div style="left:653px;top:545px;width:13px;height:13px;background:#CCFEB8;"></div><div style="left:653px;top:545px;width:13px;height:1px;background:#808080;"></div><div style="left:653px;top:545px;width:1px;height:13px;background:#808080;"></div><div style="left:654px;top:546px;width:11px;height:1px;background:#404040;"></div><div style="left:654px;top:546px;width:1px;height:11px;background:#404040;"></div><div style="left:653px;top:557px;width:13px;height:1px;background:#FFFFFF;"></div><div style="left:665px;top:545px;width:1px;height:13px;background:#FFFFFF;"></div><div style="left:654px;top:556px;width:11px;height:1px;background:#ECEEE8;"></div><div style="left:664px;top:546px;width:1px;height:11px;background:#ECEEE8;"></div><div class="t" style="left:672.0px;top:546px;transform:scaleX(0.8651);">Partner őstermelő igazolvány szám</div><div style="left:693px;top:674px;width:13px;height:13px;background:#CCFEB8;"></div><div style="left:693px;top:674px;width:13px;height:1px;background:#808080;"></div><div style="left:693px;top:674px;width:1px;height:13px;background:#808080;"></div><div style="left:694px;top:675px;width:11px;height:1px;background:#404040;"></div><div style="left:694px;top:675px;width:1px;height:11px;background:#404040;"></div><div style="left:693px;top:686px;width:13px;height:1px;background:#FFFFFF;"></div><div style="left:705px;top:674px;width:1px;height:13px;background:#FFFFFF;"></div><div style="left:694px;top:685px;width:11px;height:1px;background:#ECEEE8;"></div><div style="left:704px;top:675px;width:1px;height:11px;background:#ECEEE8;"></div><div class="t" style="left:712.0px;top:675px;transform:scaleX(0.8795);">Vállalatcsoporton belül is</div><div style="left:693px;top:690px;width:13px;height:13px;background:#CCFEB8;"></div><div style="left:693px;top:690px;width:13px;height:1px;background:#808080;"></div><div style="left:693px;top:690px;width:1px;height:13px;background:#808080;"></div><div style="left:694px;top:691px;width:11px;height:1px;background:#404040;"></div><div style="left:694px;top:691px;width:1px;height:11px;background:#404040;"></div><div style="left:693px;top:702px;width:13px;height:1px;background:#FFFFFF;"></div><div style="left:705px;top:690px;width:1px;height:13px;background:#FFFFFF;"></div><div style="left:694px;top:701px;width:11px;height:1px;background:#ECEEE8;"></div><div style="left:704px;top:691px;width:1px;height:11px;background:#ECEEE8;"></div><div class="t" style="left:712.0px;top:691px;transform:scaleX(0.8973);">Csak kiegyenlítetlen?</div><div style="left:4px;top:747px;width:86px;height:1px;background:#808080;"></div><div style="left:4px;top:747px;width:1px;height:16px;background:#808080;"></div><div style="left:4px;top:762px;width:86px;height:1px;background:#FFFFFF;"></div><div style="left:89px;top:747px;width:1px;height:16px;background:#FFFFFF;"></div><div style="left:92px;top:747px;width:95px;height:1px;background:#808080;"></div><div style="left:92px;top:747px;width:1px;height:16px;background:#808080;"></div><div style="left:92px;top:762px;width:95px;height:1px;background:#FFFFFF;"></div><div style="left:186px;top:747px;width:1px;height:16px;background:#FFFFFF;"></div><div style="left:189px;top:747px;width:19px;height:1px;background:#808080;"></div><div style="left:189px;top:747px;width:1px;height:16px;background:#808080;"></div><div style="left:189px;top:762px;width:19px;height:1px;background:#FFFFFF;"></div><div style="left:207px;top:747px;width:1px;height:16px;background:#FFFFFF;"></div><div style="left:210px;top:747px;width:789px;height:1px;background:#808080;"></div><div style="left:210px;top:747px;width:1px;height:16px;background:#808080;"></div><div style="left:210px;top:762px;width:789px;height:1px;background:#FFFFFF;"></div><div style="left:998px;top:747px;width:1px;height:16px;background:#FFFFFF;"></div><div style="left:190px;top:748px;width:17px;height:1px;background:#808080;"></div><div style="left:190px;top:748px;width:1px;height:14px;background:#808080;"></div><div class="t" style="left:6.0px;top:749px;transform:scaleX(0.9270);">-v1.96.1 ar887 H</div><div class="t" style="left:97.0px;top:749px;transform:scaleX(0.9167);">- / -</div><div class="t" style="left:212.0px;top:749px;transform:scaleX(0.9071);">Adott időszaktól</div><div style="left:0px;top:765px;width:1019px;height:1px;background:#404040;"></div><div style="left:0px;top:764px;width:1019px;height:1px;background:#808080;"></div></div><svg width="1024" height="768" viewBox="0 0 1024 768" shape-rendering="crispEdges"><path d="M62 198h1v1h-1zM61 199h2v1h-2zM56 200h1v1h-1zM60 200h3v1h-3zM56 201h2v1h-2zM59 201h3v1h-3zM56 202h5v1h-5zM57 203h3v1h-3zM58 204h1v1h-1zM62 282h1v1h-1zM61 283h2v1h-2zM56 284h1v1h-1zM60 284h3v1h-3zM56 285h2v1h-2zM59 285h3v1h-3zM56 286h5v1h-5zM57 287h3v1h-3zM58 288h1v1h-1zM62 411h1v1h-1zM61 412h2v1h-2zM56 413h1v1h-1zM60 413h3v1h-3zM56 414h2v1h-2zM59 414h3v1h-3zM56 415h5v1h-5zM57 416h3v1h-3zM58 417h1v1h-1zM62 431h1v1h-1zM61 432h2v1h-2zM56 433h1v1h-1zM60 433h3v1h-3zM56 434h2v1h-2zM59 434h3v1h-3zM56 435h5v1h-5zM57 436h3v1h-3zM58 437h1v1h-1zM62 451h1v1h-1zM61 452h2v1h-2zM56 453h1v1h-1zM60 453h3v1h-3zM56 454h2v1h-2zM59 454h3v1h-3zM56 455h5v1h-5zM57 456h3v1h-3zM58 457h1v1h-1zM62 522h1v1h-1zM61 523h2v1h-2zM56 524h1v1h-1zM60 524h3v1h-3zM56 525h2v1h-2zM59 525h3v1h-3zM56 526h5v1h-5zM57 527h3v1h-3zM58 528h1v1h-1zM345 550h1v1h-1zM344 551h2v1h-2zM339 552h1v1h-1zM343 552h3v1h-3zM339 553h2v1h-2zM342 553h3v1h-3zM339 554h5v1h-5zM340 555h3v1h-3zM341 556h1v1h-1z" fill="#000"/><path d="M240 121h1v1h-1z M238 122h2v1h-2z M237 123h1v1h-1z M236 124h1v1h-1z M237 125h1v1h-1z M238 126h2v1h-2z M240 127h1v1h-1zM478 121h1v1h-1z M479 122h2v1h-2z M481 123h1v1h-1z M482 124h1v1h-1z M481 125h1v1h-1z M479 126h2v1h-2z M478 127h1v1h-1zM731 122h7v1h-1v1h-1v1h-1v1h-1v-1h-1v-1h-1v-1h-1zM275 413h7v1h-1v1h-1v1h-1v1h-1v-1h-1v-1h-1v-1h-1zM275 433h7v1h-1v1h-1v1h-1v1h-1v-1h-1v-1h-1v-1h-1zM275 453h7v1h-1v1h-1v1h-1v1h-1v-1h-1v-1h-1v-1h-1zM275 473h7v1h-1v1h-1v1h-1v1h-1v-1h-1v-1h-1v-1h-1zM275 493h7v1h-1v1h-1v1h-1v1h-1v-1h-1v-1h-1v-1h-1z" fill="#000"/></svg><svg width="1024" height="768" viewBox="0 0 1024 768"><defs><linearGradient id="gb" x1="0" y1="0" x2="0" y2="1"><stop offset="0" stop-color="#9EE6FF"/><stop offset="0.45" stop-color="#2E8BF0"/><stop offset="1" stop-color="#1060E8"/></linearGradient><linearGradient id="gbl" x1="0" y1="0" x2="1" y2="1"><stop offset="0" stop-color="#A8F0FF"/><stop offset="0.5" stop-color="#3890F0"/><stop offset="1" stop-color="#1A5FE0"/></linearGradient><linearGradient id="gf" x1="0" y1="0" x2="1" y2="1"><stop offset="0" stop-color="#D8F4FF"/><stop offset="0.5" stop-color="#3A7EF0"/><stop offset="1" stop-color="#0030B0"/></linearGradient><linearGradient id="gcyl" x1="0" y1="0" x2="1" y2="0"><stop offset="0" stop-color="#D0F8FF"/><stop offset="0.5" stop-color="#70B8F0"/><stop offset="1" stop-color="#1050D0"/></linearGradient><radialGradient id="ginfo" cx="0.4" cy="0.3" r="0.7"><stop offset="0" stop-color="#90D8FF"/><stop offset="1" stop-color="#1060E0"/></radialGradient><linearGradient id="gtitle" x1="0" y1="0" x2="1" y2="0"><stop offset="0" stop-color="#0A246A"/><stop offset="1" stop-color="#3060E0"/></linearGradient><linearGradient id="gorange" x1="0" y1="0" x2="1" y2="1"><stop offset="0" stop-color="#FFE040"/><stop offset="1" stop-color="#E07000"/></linearGradient></defs><path d="M5.3,8.2 A4.6,4.6 0 1 1 10.6,13.6" fill="none" stroke="#6A72A4" stroke-width="2.1"/><g transform="translate(16,48)"><polygon points="1,7.8 3.5,1.5 8.3,0.6 12.5,4.5 6.4,15" fill="#F0EEFF" stroke="#303A98" stroke-width="0.9"/><polygon points="2.5,1 5.5,3.2 2,6.5" fill="#4A58D8"/><polygon points="11.2,1 15.8,1 13.2,5.8 15.6,5.8 9,15.8 10.6,9.2 8.4,9.2" fill="url(#gorange)" stroke="#7A3A00" stroke-width="0.9" stroke-linejoin="round"/></g><linearGradient id="gfo" x1="0" y1="1" x2="1" y2="0"><stop offset="0" stop-color="#E8FCFF"/><stop offset="0.45" stop-color="#4C90F0"/><stop offset="1" stop-color="#0030B8"/></linearGradient><g transform="translate(68,49)"><polygon points="5,3.5 10,0.5 13.5,3.5 13,6" fill="#F4F4FF" stroke="#404890" stroke-width="0.8"/><path d="M0.5,1.5 H5 L5.5,3.5 V14.5 H0.5 Z" fill="#B8D8FF" stroke="#0A1A80" stroke-width="1"/><path d="M4.5,6 H15.5 L13.5,14.5 H0.8 Z" fill="url(#gfo)" stroke="#0A1A80" stroke-width="1" stroke-linejoin="round"/></g><linearGradient id="gfl" x1="0" y1="0" x2="1" y2="1"><stop offset="0" stop-color="#E8E8F4"/><stop offset="0.6" stop-color="#9098C0"/><stop offset="1" stop-color="#383C70"/></linearGradient><g transform="translate(121,49)"><rect x="0.5" y="0.5" width="13" height="13.5" fill="url(#gfl)" stroke="#101038" stroke-width="1"/><rect x="2" y="1" width="9.5" height="4.5" fill="#F2F2FA"/><rect x="2.5" y="1.5" width="2" height="2" fill="#282850"/><rect x="1" y="5.5" width="12" height="1.5" fill="#6A6E98"/><rect x="3" y="7.5" width="8" height="5.5" fill="#C8CCE4"/><rect x="13" y="1" width="1" height="13" fill="#181848"/><rect x="1" y="13.2" width="13" height="1" fill="#181848"/></g><g transform="translate(171,50)"><path d="M5,0.5 L10,5.5 L7.5,5.5 L7.5,8.5 Q8,10.5 11,10 L15.5,6.5 L12,11.5 Q10.5,12.5 7,12 Q4,11.5 3.5,8 L3.5,5.5 L0.5,5.5 Z" fill="#20D020" stroke="#003000" stroke-width="1.1"/></g><g transform="translate(222,48)"><polygon points="8,0.5 15.5,7.5 12.5,9 15.5,14 14.5,15.5 1.5,15.5 0.5,14 3.5,9 0.5,7.5" fill="url(#gb)" stroke="#001070" stroke-width="1.2" stroke-linejoin="round"/><path d="M3.5,9 L8,5 L12.5,9" fill="none" stroke="#1050C0" stroke-width="0.6"/></g><g transform="translate(275,48)"><polygon points="0.8,8 11.5,0.8 12,15.2" fill="url(#gbl)" stroke="#001070" stroke-width="1.3" stroke-linejoin="round"/></g><g transform="translate(326,48)"><polygon points="0.5,0.8 11.5,8 0.5,15.2" fill="url(#gbl)" stroke="#001070" stroke-width="1.3" stroke-linejoin="round"/></g><g transform="translate(376,64) scale(1,-1)"><polygon points="8,0.5 15.5,7.5 12.5,9 15.5,14 14.5,15.5 1.5,15.5 0.5,14 3.5,9 0.5,7.5" fill="url(#gb)" stroke="#001070" stroke-width="1.2" stroke-linejoin="round"/><path d="M3.5,9 L8,5 L12.5,9" fill="none" stroke="#1050C0" stroke-width="0.6"/></g><g transform="translate(427,48)"><rect x="0.5" y="1" width="11" height="14.5" fill="#FFFFFF"/><path d="M11.5,1 V15.5 H0.5" fill="none" stroke="#8088A8" stroke-width="1"/><path d="M10,1.5 L3,13" stroke="#E08A10" stroke-width="3.2"/><path d="M9.5,1 L3,12" stroke="#FFC840" stroke-width="1.2"/><path d="M3.2,12.6 L2.5,14" stroke="#303030" stroke-width="1.5"/></g><g transform="translate(480,48)"><path d="M0.5,3.5 Q0.5,0.5 6,0.5 Q11.5,0.5 11.5,3.5 V13 Q11.5,15.5 6,15.5 Q0.5,15.5 0.5,13 Z" fill="url(#gcyl)" stroke="#00207A" stroke-width="1"/><ellipse cx="6" cy="3.5" rx="5" ry="2.3" fill="#3A80F0"/></g><g transform="translate(529,48)"><circle cx="8" cy="8" r="7.5" fill="url(#ginfo)" stroke="#001868" stroke-width="1"/><rect x="6.5" y="6" width="3" height="7" fill="#F0FAFF"/><rect x="5.5" y="12" width="5" height="1.5" fill="#F0FAFF"/><rect x="5.5" y="6" width="2" height="1.2" fill="#F0FAFF"/><circle cx="8.5" cy="3.6" r="1.3" fill="#E8F8FF"/></g><g transform="translate(579,47)"><rect x="0.5" y="0.5" width="17" height="17" fill="#F8F4E4" stroke="#8C94B4" stroke-width="1"/><rect x="1" y="1" width="16" height="2.5" fill="#98B0E0"/><rect x="2" y="4.2" width="6.3" height="1.6" fill="#8090C0"/><rect x="9.7" y="4.2" width="6.3" height="1.6" fill="#8090C0"/><rect x="8.6" y="4" width="0.9" height="13" fill="#C8C4C0"/><path d="M2.5,8.5 H7 M2.5,11 H6.5 M2.5,13.5 H7 M10.5,8.5 H15 M10.5,11 H14 M10.5,13.5 H15" stroke="#E4DCC8" stroke-width="1"/></g><g transform="translate(632,48)"><path d="M0.5,5.5 L3,2.8 Q5.5,0.5 9,0.5 Q12.5,0.8 14.8,4 L12.3,4.8 Q10.5,3.2 8.8,3.4 Q7.2,3.6 6.8,5.6 L8.3,5.6 L4.4,10.2 Z" fill="#22D022" stroke="#002800" stroke-width="1" stroke-linejoin="round"/><g transform="rotate(180 8 8)"><path d="M0.5,5.5 L3,2.8 Q5.5,0.5 9,0.5 Q12.5,0.8 14.8,4 L12.3,4.8 Q10.5,3.2 8.8,3.4 Q7.2,3.6 6.8,5.6 L8.3,5.6 L4.4,10.2 Z" fill="#22D022" stroke="#002800" stroke-width="1" stroke-linejoin="round"/></g></g><g transform="translate(683,48)"><path d="M9.5,9.5 L14.5,14.5" stroke="#3A2A10" stroke-width="3.2" stroke-linecap="round"/><path d="M10,10 L14.2,14.2" stroke="#E8B878" stroke-width="1.2"/><circle cx="5.5" cy="5.5" r="5" fill="#B8F0FF" stroke="#355A6A" stroke-width="1.1"/></g><g><path d="M732,48.5 H752 M732,62.5 H752 M734.5,45 V66 M748.5,45 V66" stroke="#8A86A8" stroke-width="1.3"/><rect x="734.5" y="52.5" width="14" height="6" fill="#A8A8A0" stroke="#1A1A1A" stroke-width="1.2"/></g><radialGradient id="gglb" cx="0.35" cy="0.35" r="0.7"><stop offset="0" stop-color="#FFFFFF"/><stop offset="1" stop-color="#7090D8"/></radialGradient><g transform="translate(784,48)"><path d="M0.5,1 L6,0.5 L9.5,4 L8,9 L1,6 Z" fill="url(#gglb)" stroke="#5A6AA8" stroke-width="0.7"/><path d="M1.5,2.5 L7.5,7.5" stroke="#4060B0" stroke-width="1.2"/><rect x="9" y="0.5" width="1.2" height="5" fill="#383838"/><path d="M6.5,10 Q7.5,4.8 9.6,4.8 Q11.8,4.8 13,10 Z" fill="#F09020" stroke="#C06000" stroke-width="0.6"/><rect x="3.5" y="9.5" width="13" height="6" rx="1.2" fill="#FFFFFF" stroke="#101010" stroke-width="1.1"/><path d="M5.5,12.5 H15" stroke="#405060" stroke-width="1.2" stroke-dasharray="1.2,0.9"/></g><g transform="translate(833,47)"><rect x="0.5" y="0.5" width="18" height="17" fill="#E8E4F0" stroke="#101010" stroke-width="1.2"/><path d="M0.5,3.5 H18.5 M0.5,9.5 H18.5 M0.5,15 H18.5 M5,0.5 V17.5 M9.5,0.5 V17.5 M14,0.5 V17.5" stroke="#181818" stroke-width="1"/><polygon points="8,7 14,7 14,3.5 21.5,9 14,14.5 14,11 8,11" fill="#1060F8"/></g><g transform="translate(888,47)"><rect x="0.5" y="0.5" width="18" height="17" fill="#E8E4F0" stroke="#101010" stroke-width="1.2"/><path d="M0.5,3.5 H18.5 M0.5,9.5 H18.5 M0.5,15 H18.5 M5,0.5 V17.5 M9.5,0.5 V17.5 M14,0.5 V17.5" stroke="#181818" stroke-width="1"/></g><g transform="translate(885,47)"><polygon points="0.5,7 7,7 7,3.5 12.5,9 7,14.5 7,11 0.5,11" fill="#1060F8"/></g><linearGradient id="gmaxb" x1="0" y1="0" x2="0" y2="1"><stop offset="0" stop-color="#FFFFFF"/><stop offset="1" stop-color="#D8ECFF"/></linearGradient><g transform="translate(939,48)"><rect x="0.5" y="0.5" width="15.5" height="14.5" fill="url(#gmaxb)" stroke="#142A7A" stroke-width="1"/><rect x="1" y="1" width="14.5" height="3" fill="url(#gtitle)"/><path d="M2,5 h4 l-4,4z M14.5,5 h-4 l4,4z M2,14 h4 l-4,-4z M14.5,14 h-4 l4,-4z" fill="#E03818"/></g><g transform="translate(990,48)"><polygon points="5,0.5 11,0.5 15.5,5 15.5,11 11,15.5 5,15.5 0.5,11 0.5,5" fill="#E8101C" stroke="#7A0000" stroke-width="1"/><path d="M5,5 L11,11 M11,5 L5,11" stroke="#FFFFFF" stroke-width="2.6"/></g><rect x="976" y="11" width="6" height="2" fill="#000"/><path d="M993.5,4.5 h6 v5 h-6 z M991,7.5 h6 v5 h-6z" fill="none" stroke="#000" stroke-width="1"/><path d="M993,4 h7 v1 h-7z M990.5,7 h7 v1 h-7z" fill="#000"/><path d="M1010,5 L1017,11.5 M1017,5 L1010,11.5" stroke="#000" stroke-width="1.6"/><rect x="9" y="77" width="9" height="10" fill="#80C474"/><path d="M11 79h6v1.6h-0.8v-0.6h-1.6v5h0.9v1h-3v-1h0.9v-5h-1.6v0.6h-0.8z" fill="#003800"/><circle cx="197.5" cy="755" r="5.2" fill="#FAFAFA"/><path d="M192.8,758 A5,5 0 0 1 201.2,751.2" fill="none" stroke="#303030" stroke-width="1.1"/><path d="M1004,764 L1016,752 M1008,764 L1016,756 M1012,764 L1016,760" stroke="#808080" stroke-width="1.2"/><path d="M1005,764 L1016,753 M1009,764 L1016,757 M1013,764 L1016,761" stroke="#FFFFFF" stroke-width="0.8"/></svg></body></html>
